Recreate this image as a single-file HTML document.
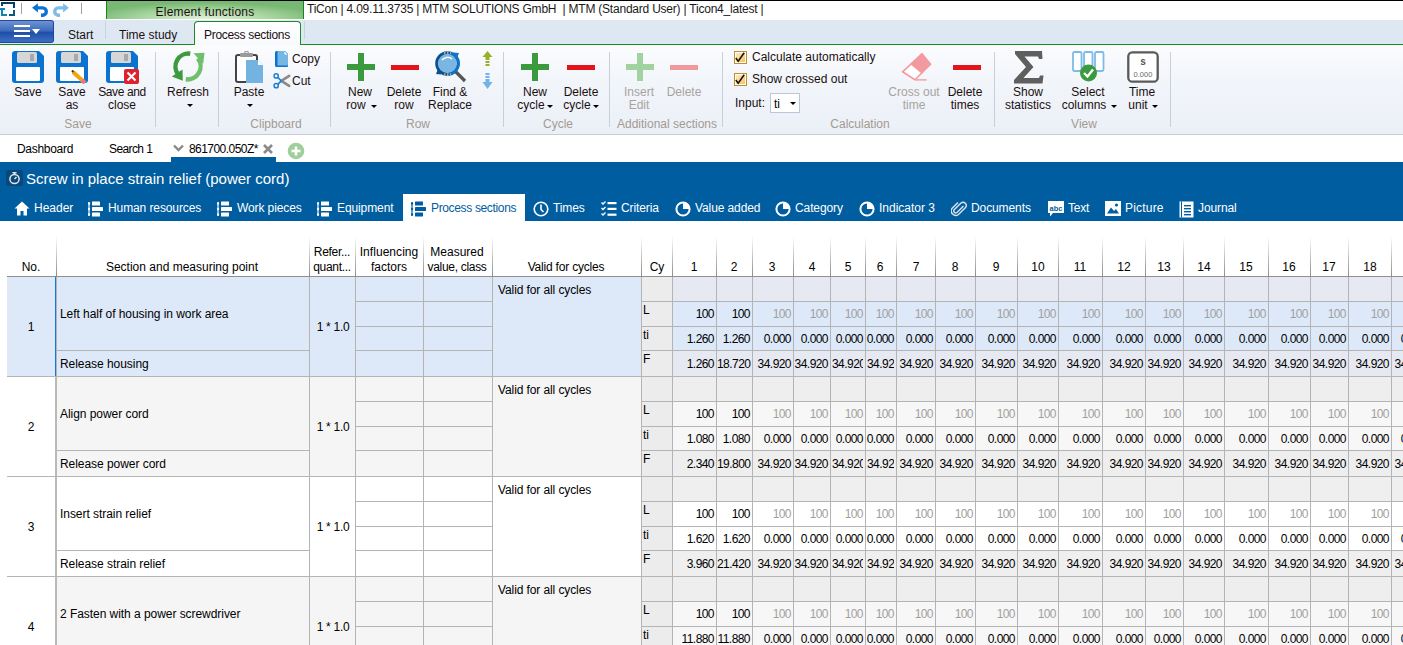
<!DOCTYPE html><html><head><meta charset="utf-8"><style>

*{box-sizing:border-box}
body{margin:0;width:1403px;height:645px;overflow:hidden;position:relative;background:#fff;font-family:"Liberation Sans",sans-serif;font-size:12px;color:#000}
.ab{position:absolute}
.t{position:absolute;white-space:nowrap;line-height:1}
.gl{position:absolute;color:#a09890;font-size:12px;white-space:nowrap;line-height:1}
.sep{position:absolute;width:1px;background:#c5cfdb;top:52px;height:75px}

</style></head><body>
<div class="ab" style="left:0px;top:0px;width:1403px;height:1px;background:#000"></div>
<div class="ab" style="left:0px;top:1px;width:1403px;height:19px;background:#fff"></div>
<svg class="ab" style="left:0;top:0" width="17" height="18" viewBox="0 0 17 18">
<path d="M1 2 H15 V8 H13 V4 H3 V6 H1 Z" fill="#0a3d6b"/>
<path d="M0 8 H5 V10 H3 V14 H7 V16 H1 V10 H0 Z" fill="#0f87b5"/>
<path d="M13 10 H15 V16 H9 V14 H13 Z" fill="#0a5a7c"/>
</svg>
<div class="ab" style="left:21px;top:3px;width:1px;height:11px;background:#a0a0a0"></div>
<svg class="ab" style="left:31px;top:2px" width="18" height="16" viewBox="0 0 18 16">
<path d="M6 5.9 H11.65 A3.65 3.65 0 0 1 11.65 13.2 H10" fill="none" stroke="#0a74d0" stroke-width="3.4"/>
<path d="M1.1 5.8 L6.9 1.2 L6.9 10.4 Z" fill="#0a74d0"/></svg>
<svg class="ab" style="left:52px;top:2px" width="18" height="16" viewBox="0 0 18 16">
<path d="M12 5.9 H6.35 A3.65 3.65 0 0 0 6.35 13.2 H8" fill="none" stroke="#80bce8" stroke-width="3.4"/>
<path d="M16.9 5.8 L11.1 1.2 L11.1 10.4 Z" fill="#80bce8"/></svg>
<div class="ab" style="left:81px;top:3px;width:1px;height:11px;background:#a0a0a0"></div>
<div class="ab" style="left:106px;top:1px;width:198px;height:18px;background:radial-gradient(ellipse 60% 90% at 50% 100%,#e2f1dd 0%,#a9d6a0 55%,#78b874 100%);border-left:1px solid #118a11;border-right:1px solid #118a11"></div>
<div class="t" style="left:55px;width:300px;text-align:center;top:6px;font-size:12px;color:#1a1010;letter-spacing:0.2px">Element functions</div>
<div class="t" style="left:307px;top:3px;font-size:12px;color:#1a1a1a;letter-spacing:-0.22px">TiCon | 4.09.11.3735 | MTM SOLUTIONS GmbH &nbsp;| MTM (Standard User) | Ticon4_latest |</div>
<div class="ab" style="left:0px;top:20px;width:1403px;height:24px;background:#dee8f3"></div>
<div class="ab" style="left:0px;top:44px;width:1403px;height:1px;background:#1f8a1f"></div>
<div class="ab" style="left:0px;top:20px;width:54px;height:23px;background:linear-gradient(#6d93d0 0%,#3f6cbf 45%,#1f4fa8 55%,#3d6fc4 100%);border:1px solid #1b4aa0;border-left:none;border-radius:0 3px 3px 0"></div>
<div class="ab" style="left:14px;top:25px;width:16px;height:2px;background:#fff"></div>
<div class="ab" style="left:14px;top:30px;width:16px;height:2px;background:#fff"></div>
<div class="ab" style="left:14px;top:35px;width:16px;height:2px;background:#fff"></div>
<svg class="ab" style="left:32px;top:29px" width="8" height="5"><path d="M0 0 H8 L4 5 Z" fill="#fff"/></svg>
<div class="t" style="left:68px;top:29px;font-size:12px;color:#1a1010;">Start</div>
<div class="ab" style="left:105px;top:21px;width:1px;height:18px;background:#c9d3e0"></div>
<div class="t" style="left:119px;top:29px;font-size:12px;color:#1a1010;">Time study</div>
<div class="ab" style="left:194px;top:21px;width:107px;height:24px;background:linear-gradient(#ffffff,#f7f9fc);border:1px solid #1f8a1f;border-bottom:none;border-radius:4px 4px 0 0"></div>
<div class="t" style="left:204px;top:29px;font-size:12px;color:#1a1010;letter-spacing:-0.3px">Process sections</div>
<div class="ab" style="left:304px;top:21px;width:1px;height:18px;background:#c9d3e0"></div>
<div class="ab" style="left:0px;top:45px;width:1403px;height:89px;background:linear-gradient(#fbfcfe 0%,#f2f5fa 40%,#ebf0f7 100%)"></div>
<div class="ab" style="left:0px;top:134px;width:1403px;height:1px;background:#c3cedb"></div>
<div class="ab" style="left:155px;top:52px;width:1px;height:75px;background:#c6d0dc"></div>
<div class="ab" style="left:218px;top:52px;width:1px;height:75px;background:#c6d0dc"></div>
<div class="ab" style="left:330px;top:52px;width:1px;height:75px;background:#c6d0dc"></div>
<div class="ab" style="left:503px;top:52px;width:1px;height:75px;background:#c6d0dc"></div>
<div class="ab" style="left:609px;top:52px;width:1px;height:75px;background:#c6d0dc"></div>
<div class="ab" style="left:722px;top:52px;width:1px;height:75px;background:#c6d0dc"></div>
<div class="ab" style="left:994px;top:52px;width:1px;height:75px;background:#c6d0dc"></div>
<div class="ab" style="left:1170px;top:52px;width:1px;height:75px;background:#c6d0dc"></div>
<div class="t" style="left:-72px;width:300px;text-align:center;top:118px;font-size:12px;color:#a39a92;">Save</div>
<div class="t" style="left:126px;width:300px;text-align:center;top:118px;font-size:12px;color:#a39a92;">Clipboard</div>
<div class="t" style="left:268px;width:300px;text-align:center;top:118px;font-size:12px;color:#a39a92;">Row</div>
<div class="t" style="left:408px;width:300px;text-align:center;top:118px;font-size:12px;color:#a39a92;">Cycle</div>
<div class="t" style="left:517px;width:300px;text-align:center;top:118px;font-size:12px;color:#a39a92;">Additional sections</div>
<div class="t" style="left:710px;width:300px;text-align:center;top:118px;font-size:12px;color:#a39a92;">Calculation</div>
<div class="t" style="left:934px;width:300px;text-align:center;top:118px;font-size:12px;color:#a39a92;">View</div>
<svg class="ab" style="left:12px;top:51px" width="33" height="33" viewBox="0 0 33 33">
<path d="M3 0 H27 L32 5 V29 A3 3 0 0 1 29 32 H3 A3 3 0 0 1 0 29 V3 A3 3 0 0 1 3 0 Z" fill="#0b73cf"/>
<rect x="5" y="1" width="20" height="11" rx="1.5" fill="#d6d6d6"/>
<rect x="18" y="3" width="4" height="7" fill="#a9a9a9"/>
<rect x="4" y="16" width="24" height="14" rx="1" fill="#fff"/></svg>
<div class="t" style="left:-122px;width:300px;text-align:center;top:86px;font-size:12px;color:#1a1010;">Save</div>
<svg class="ab" style="left:56px;top:51px" width="33" height="33" viewBox="0 0 33 33">
<path d="M3 0 H27 L32 5 V29 A3 3 0 0 1 29 32 H3 A3 3 0 0 1 0 29 V3 A3 3 0 0 1 3 0 Z" fill="#0b73cf"/>
<rect x="5" y="1" width="20" height="11" rx="1.5" fill="#d6d6d6"/>
<rect x="18" y="3" width="4" height="7" fill="#a9a9a9"/>
<rect x="4" y="16" width="24" height="14" rx="1" fill="#fff"/><path d="M17 21 L28 31" stroke="#f2a40d" stroke-width="4" stroke-linecap="butt"/><path d="M26 29 L29 32" stroke="#e87c7c" stroke-width="4"/><path d="M16 19.5 L17.5 21" stroke="#333" stroke-width="2"/></svg>
<div class="t" style="left:-78px;width:300px;text-align:center;top:86px;font-size:12px;color:#1a1010;">Save</div>
<div class="t" style="left:-78px;width:300px;text-align:center;top:99px;font-size:12px;color:#1a1010;">as</div>
<svg class="ab" style="left:106px;top:51px" width="33" height="33" viewBox="0 0 33 33">
<path d="M3 0 H27 L32 5 V29 A3 3 0 0 1 29 32 H3 A3 3 0 0 1 0 29 V3 A3 3 0 0 1 3 0 Z" fill="#0b73cf"/>
<rect x="5" y="1" width="20" height="11" rx="1.5" fill="#d6d6d6"/>
<rect x="18" y="3" width="4" height="7" fill="#a9a9a9"/>
<rect x="4" y="16" width="24" height="14" rx="1" fill="#fff"/><rect x="18" y="18" width="15" height="15" rx="2" fill="#e0202a"/><path d="M21.5 21.5 L29.5 29.5 M29.5 21.5 L21.5 29.5" stroke="#fff" stroke-width="2.2"/></svg>
<div class="t" style="left:-28px;width:300px;text-align:center;top:86px;font-size:12px;color:#1a1010;letter-spacing:-0.4px">Save and</div>
<div class="t" style="left:-28px;width:300px;text-align:center;top:99px;font-size:12px;color:#1a1010;">close</div>
<svg class="ab" style="left:171px;top:50px" width="35" height="34" viewBox="0 0 35 34">
<path d="M19.26 3.7 A13 13 0 0 0 7.2 24.6" fill="none" stroke="#3d9a3f" stroke-width="4.4"/>
<path d="M0.8 26.5 L11.5 19.5 L11.8 30.8 Z" fill="#3d9a3f"/>
<path d="M14.74 29.3 A13 13 0 0 0 26.8 8.4" fill="none" stroke="#6fbf6b" stroke-width="4.4"/>
<path d="M22.5 3.2 L33.5 2.8 L32.2 14 Z" fill="#6fbf6b"/></svg>
<div class="t" style="left:38px;width:300px;text-align:center;top:86px;font-size:12px;color:#1a1010;">Refresh</div>
<svg class="ab" style="left:187px;top:104px" width="6" height="4"><path d="M0 0 H6 L3 3 Z" fill="#000"/></svg>
<svg class="ab" style="left:235px;top:51px" width="29" height="33" viewBox="0 0 29 33">
<rect x="1" y="4" width="21" height="27" rx="2" fill="#fff" stroke="#444" stroke-width="2"/>
<rect x="5" y="2" width="13" height="4" rx="1" fill="#9a9a9a"/>
<circle cx="11.5" cy="2" r="1.8" fill="none" stroke="#9a9a9a" stroke-width="1.2"/>
<path d="M11 9 H23 L28 14 V32 H11 Z" fill="#72b3e2"/>
<path d="M23 9 V14 H28 Z" fill="#fff"/></svg>
<div class="t" style="left:99px;width:300px;text-align:center;top:86px;font-size:12px;color:#1a1010;">Paste</div>
<svg class="ab" style="left:247px;top:104px" width="6" height="4"><path d="M0 0 H6 L3 3 Z" fill="#000"/></svg>
<svg class="ab" style="left:275px;top:51px" width="14" height="17" viewBox="0 0 14 17">
<path d="M1.5 0 H10 L13 3 V15 A1 1 0 0 1 12 16 H1.5 A1.5 1.5 0 0 1 0 14.5 V1.5 A1.5 1.5 0 0 1 1.5 0 Z" fill="#0b73cf"/>
<path d="M2.5 0 H10 L13 3 V13.5 A1 1 0 0 1 12 14.5 H2.5 Z" fill="#76b6e3"/><path d="M9.5 0.5 V3.5 H12.5 Z" fill="#fff"/></svg>
<div class="t" style="left:292px;top:53px;font-size:12px;color:#1a1010;">Copy</div>
<svg class="ab" style="left:273px;top:73px" width="18" height="16" viewBox="0 0 18 16">
<path d="M8.3 7.9 L16.2 2.9 M8.3 7.9 L16.2 12.9" stroke="#8a8a8a" stroke-width="2.6" stroke-linecap="round"/>
<path d="M4.8 4.4 L8.3 7.9 L4.8 11.4" fill="none" stroke="#1b7fd6" stroke-width="1.6"/>
<circle cx="3.2" cy="2.9" r="2.1" fill="none" stroke="#1b7fd6" stroke-width="1.5"/>
<circle cx="3.2" cy="12.7" r="2.1" fill="none" stroke="#1b7fd6" stroke-width="1.5"/></svg>
<div class="t" style="left:292px;top:75px;font-size:12px;color:#1a1010;">Cut</div>
<div class="ab" style="left:358px;top:53px;width:6px;height:28px;background:#3c9a3e"></div>
<div class="ab" style="left:347px;top:64px;width:28px;height:6px;background:#3c9a3e"></div>
<div class="t" style="left:210px;width:300px;text-align:center;top:86px;font-size:12px;color:#1a1010;">New</div>
<div class="t" style="left:206px;width:300px;text-align:center;top:99px;font-size:12px;color:#1a1010;">row</div>
<svg class="ab" style="left:371px;top:105px" width="6" height="4"><path d="M0 0 H6 L3 3 Z" fill="#000"/></svg>
<div class="ab" style="left:391px;top:65px;width:28px;height:5px;background:#e2141c"></div>
<div class="t" style="left:254px;width:300px;text-align:center;top:86px;font-size:12px;color:#1a1010;">Delete</div>
<div class="t" style="left:254px;width:300px;text-align:center;top:99px;font-size:12px;color:#1a1010;">row</div>
<svg class="ab" style="left:435px;top:51px" width="32" height="32" viewBox="0 0 32 32">
<path d="M20 20 L30 30" stroke="#555" stroke-width="3.2"/>
<circle cx="12.5" cy="12.5" r="11" fill="#79b6e2" stroke="#0d4f8c" stroke-width="2.6"/><path d="M15 1.8 A11 11 0 0 1 14 23.4" fill="none" stroke="#0a74d0" stroke-width="2.6"/><path d="M9 1.6 H16 M9 23.6 H16" stroke="#b0a890" stroke-width="2.6" stroke-dasharray="1.5 1.5"/>
<path d="M7 9 A7 7 0 0 1 17 8" fill="none" stroke="#fff" stroke-width="1.5"/>
<path d="M18 1.5 L24 2 L22 7 Z" fill="#1a73c8"/><path d="M6.5 23.5 L1 23 L3 18 Z" fill="#0d4f8c"/></svg>
<div class="t" style="left:300px;width:300px;text-align:center;top:86px;font-size:12px;color:#1a1010;">Find &amp;</div>
<div class="t" style="left:300px;width:300px;text-align:center;top:99px;font-size:12px;color:#1a1010;">Replace</div>
<svg class="ab" style="left:482px;top:51px" width="11" height="39" viewBox="0 0 11 39">
<path d="M5.5 0 L10.5 6 H0.5 Z" fill="#9aae28"/><rect x="3.5" y="6" width="4" height="3" fill="#9aae28"/><rect x="3.5" y="10" width="4" height="2" fill="#9aae28"/><rect x="3.5" y="13" width="4" height="2" fill="#9aae28"/>
<rect x="3.5" y="22" width="4" height="2" fill="#72b2e6"/><rect x="3.5" y="25" width="4" height="2" fill="#72b2e6"/><rect x="3.5" y="28" width="4" height="3" fill="#72b2e6"/><path d="M5.5 38 L10.5 31 H0.5 Z" fill="#72b2e6"/></svg>
<div class="ab" style="left:532px;top:53px;width:6px;height:28px;background:#3c9a3e"></div>
<div class="ab" style="left:521px;top:64px;width:28px;height:6px;background:#3c9a3e"></div>
<div class="t" style="left:385px;width:300px;text-align:center;top:86px;font-size:12px;color:#1a1010;">New</div>
<div class="t" style="left:381px;width:300px;text-align:center;top:99px;font-size:12px;color:#1a1010;">cycle</div>
<svg class="ab" style="left:547px;top:105px" width="6" height="4"><path d="M0 0 H6 L3 3 Z" fill="#000"/></svg>
<div class="ab" style="left:567px;top:65px;width:28px;height:5px;background:#e2141c"></div>
<div class="t" style="left:431px;width:300px;text-align:center;top:86px;font-size:12px;color:#1a1010;">Delete</div>
<div class="t" style="left:427px;width:300px;text-align:center;top:99px;font-size:12px;color:#1a1010;">cycle</div>
<svg class="ab" style="left:593px;top:105px" width="6" height="4"><path d="M0 0 H6 L3 3 Z" fill="#000"/></svg>
<div class="ab" style="left:637px;top:53px;width:6px;height:28px;background:#a0d3a0"></div>
<div class="ab" style="left:626px;top:64px;width:28px;height:6px;background:#a0d3a0"></div>
<div class="t" style="left:489px;width:300px;text-align:center;top:86px;font-size:12px;color:#a8a3a0;">Insert</div>
<div class="t" style="left:489px;width:300px;text-align:center;top:99px;font-size:12px;color:#a8a3a0;">Edit</div>
<div class="ab" style="left:670px;top:65px;width:28px;height:5px;background:#f0999c"></div>
<div class="t" style="left:534px;width:300px;text-align:center;top:86px;font-size:12px;color:#a8a3a0;">Delete</div>
<svg class="ab" style="left:734px;top:51px" width="13" height="13" viewBox="0 0 13 13">
<defs><linearGradient id="cg" x1="0" y1="0" x2="1" y2="1"><stop offset="0" stop-color="#fde9c4"/><stop offset="1" stop-color="#f8c25a"/></linearGradient></defs>
<rect x="0.5" y="0.5" width="12" height="12" fill="#fff" stroke="#bf8f2a"/><rect x="2" y="2" width="9" height="9" fill="url(#cg)"/>
<path d="M1.8 7 L4.2 10.3 L10.2 1.8" fill="none" stroke="#111" stroke-width="1.5"/></svg>
<div class="t" style="left:752px;top:51px;font-size:12px;color:#1a1010;">Calculate automatically</div>
<svg class="ab" style="left:734px;top:73px" width="13" height="13" viewBox="0 0 13 13">
<defs><linearGradient id="cg" x1="0" y1="0" x2="1" y2="1"><stop offset="0" stop-color="#fde9c4"/><stop offset="1" stop-color="#f8c25a"/></linearGradient></defs>
<rect x="0.5" y="0.5" width="12" height="12" fill="#fff" stroke="#bf8f2a"/><rect x="2" y="2" width="9" height="9" fill="url(#cg)"/>
<path d="M1.8 7 L4.2 10.3 L10.2 1.8" fill="none" stroke="#111" stroke-width="1.5"/></svg>
<div class="t" style="left:752px;top:73px;font-size:12px;color:#1a1010;">Show crossed out</div>
<div class="t" style="left:735px;top:97px;font-size:12px;color:#1a1010;">Input:</div>
<div class="ab" style="left:770px;top:93px;width:30px;height:20px;background:#fff;border:1px solid #b9c7d8"></div>
<div class="t" style="left:774px;top:98px;font-size:12px;color:#000;">ti</div>
<svg class="ab" style="left:790px;top:102px" width="6" height="4"><path d="M0 0 H6 L3 3 Z" fill="#000"/></svg>
<svg class="ab" style="left:901px;top:52px" width="31" height="30" viewBox="0 0 31 30">
<path d="M21 1.7 L29.6 12.3 L21 20.8 L10.2 11.8 Z" fill="#f39aa0" stroke="#f39aa0" stroke-width="1.6" stroke-linejoin="round"/>
<path d="M10.2 11.8 L21 20.8 L14 27.7 L1.5 19.8 Z" fill="#fff" stroke="#f39aa0" stroke-width="1.6" stroke-linejoin="round"/>
<path d="M14 27.9 H25.7" stroke="#f39aa0" stroke-width="1.4"/></svg>
<div class="t" style="left:764px;width:300px;text-align:center;top:86px;font-size:12px;color:#a8a3a0;">Cross out</div>
<div class="t" style="left:764px;width:300px;text-align:center;top:99px;font-size:12px;color:#a8a3a0;">time</div>
<div class="ab" style="left:953px;top:65px;width:28px;height:5px;background:#e2141c"></div>
<div class="t" style="left:815px;width:300px;text-align:center;top:86px;font-size:12px;color:#1a1010;">Delete</div>
<div class="t" style="left:815px;width:300px;text-align:center;top:99px;font-size:12px;color:#1a1010;">times</div>
<svg class="ab" style="left:1014px;top:51px" width="30" height="33" viewBox="0 0 30 33">
<path d="M1 0 H28 L28.5 8 H25 L24 5.5 H10.5 L19.5 16 L9.5 27 H25 L26 24.5 H29.5 L28.5 32.5 H0 V29 L12 16 L1 3 Z" fill="#5f5f5f"/></svg>
<div class="t" style="left:878px;width:300px;text-align:center;top:86px;font-size:12px;color:#1a1010;">Show</div>
<div class="t" style="left:878px;width:300px;text-align:center;top:99px;font-size:12px;color:#1a1010;">statistics</div>
<svg class="ab" style="left:1072px;top:51px" width="33" height="32" viewBox="0 0 33 32">
<rect x="1" y="1" width="8.5" height="19" rx="1.5" fill="#fff" stroke="#7cbbe8" stroke-width="1.8"/>
<rect x="12" y="1" width="8.5" height="19" rx="1.5" fill="#fff" stroke="#7cbbe8" stroke-width="1.8"/>
<rect x="23" y="1" width="8.5" height="19" rx="1.5" fill="#fff" stroke="#7cbbe8" stroke-width="1.8"/>
<circle cx="16.5" cy="22" r="8.5" fill="#3c9a3e"/>
<path d="M12 22 L15.5 25.5 L21 18.5" fill="none" stroke="#fff" stroke-width="2.4"/></svg>
<div class="t" style="left:938px;width:300px;text-align:center;top:86px;font-size:12px;color:#1a1010;">Select</div>
<div class="t" style="left:934px;width:300px;text-align:center;top:99px;font-size:12px;color:#1a1010;">columns</div>
<svg class="ab" style="left:1111px;top:105px" width="6" height="4"><path d="M0 0 H6 L3 3 Z" fill="#000"/></svg>
<svg class="ab" style="left:1127px;top:51px" width="32" height="32" viewBox="0 0 32 32">
<rect x="1.3" y="1.3" width="29.4" height="29.4" rx="4" fill="#fff" stroke="#5a5a5a" stroke-width="2.3"/>
<text x="16" y="14" font-family="Liberation Sans" font-size="10" font-weight="bold" fill="#555" text-anchor="middle">s</text>
<text x="16" y="25.5" font-family="Liberation Sans" font-size="7.5" fill="#6a6a6a" text-anchor="middle">0.000</text></svg>
<div class="t" style="left:992px;width:300px;text-align:center;top:86px;font-size:12px;color:#1a1010;">Time</div>
<div class="t" style="left:988px;width:300px;text-align:center;top:99px;font-size:12px;color:#1a1010;">unit</div>
<svg class="ab" style="left:1152px;top:105px" width="6" height="4"><path d="M0 0 H6 L3 3 Z" fill="#000"/></svg>
<div class="t" style="left:17px;top:143px;font-size:12px;color:#000;letter-spacing:-0.3px">Dashboard</div>
<div class="t" style="left:109px;top:143px;font-size:12px;color:#000;letter-spacing:-0.6px">Search 1</div>
<svg class="ab" style="left:173px;top:144px" width="11" height="8" viewBox="0 0 11 8"><path d="M1 1.5 L5.5 6 L10 1.5" fill="none" stroke="#8a8a8a" stroke-width="2.4"/></svg>
<div class="t" style="left:189px;top:143px;font-size:12px;color:#000;letter-spacing:-0.55px">861700.050Z*</div>
<svg class="ab" style="left:263px;top:144px" width="10" height="10" viewBox="0 0 10 10"><path d="M1 1 L9 9 M9 1 L1 9" stroke="#8a8a8a" stroke-width="2.6"/></svg>
<svg class="ab" style="left:287px;top:142px" width="18" height="18" viewBox="0 0 18 18"><circle cx="9" cy="9" r="8.3" fill="#9fd09b"/><path d="M9 4.5 V13.5 M4.5 9 H13.5" stroke="#fff" stroke-width="2.6"/></svg>
<div class="ab" style="left:171px;top:157px;width:105px;height:5px;background:#005d9f"></div>
<div class="ab" style="left:0px;top:162px;width:1403px;height:59px;background:#005d9f"></div>
<svg class="ab" style="left:6px;top:170px" width="17" height="16" viewBox="0 0 17 16">
<rect x="0" y="0" width="17" height="16" rx="2" fill="#0a4879"/>
<circle cx="8.5" cy="9" r="4.6" fill="none" stroke="#dfe8f0" stroke-width="1.5"/>
<path d="M6.5 2.8 H10.5 M8.5 3 V4.5 M8.5 9 L10.5 7" stroke="#dfe8f0" stroke-width="1.4"/></svg>
<div class="t" style="left:26px;top:171px;font-size:15px;color:#fff;letter-spacing:0px">Screw in place strain relief (power cord)</div>
<div class="ab" style="left:403px;top:194px;width:122px;height:27px;background:#fff"></div>
<svg class="ab" style="left:14px;top:201px" width="16" height="15" viewBox="0 0 16 15"><path d="M8 0.5 L15.5 7.5 H13 V14.5 H9.5 V10 H6.5 V14.5 H3 V7.5 H0.5 Z" fill="#fff"/></svg>
<div class="t" style="left:34px;top:202px;font-size:12px;color:#fff;">Header</div>
<svg class="ab" style="left:88px;top:201px" width="16" height="16" viewBox="0 0 16 16">
<path d="M1 1 V15" stroke="#fff" stroke-width="1.2"/>
<circle cx="1" cy="2.5" r="1.2" fill="#fff"/><circle cx="1" cy="8" r="1.2" fill="#fff"/><circle cx="1" cy="13.5" r="1.2" fill="#fff"/>
<rect x="4" y="0.5" width="8" height="4" rx="0.5" fill="#fff"/><rect x="4" y="6" width="11" height="4" rx="0.5" fill="#fff"/><rect x="4" y="11.5" width="8" height="4" rx="0.5" fill="#fff"/></svg>
<div class="t" style="left:108px;top:202px;font-size:12px;color:#fff;letter-spacing:-0.1px">Human resources</div>
<svg class="ab" style="left:217px;top:201px" width="16" height="16" viewBox="0 0 16 16">
<path d="M1 1 V15" stroke="#fff" stroke-width="1.2"/>
<circle cx="1" cy="2.5" r="1.2" fill="#fff"/><circle cx="1" cy="8" r="1.2" fill="#fff"/><circle cx="1" cy="13.5" r="1.2" fill="#fff"/>
<rect x="4" y="0.5" width="8" height="4" rx="0.5" fill="#fff"/><rect x="4" y="6" width="11" height="4" rx="0.5" fill="#fff"/><rect x="4" y="11.5" width="8" height="4" rx="0.5" fill="#fff"/></svg>
<div class="t" style="left:237px;top:202px;font-size:12px;color:#fff;letter-spacing:-0.1px">Work pieces</div>
<svg class="ab" style="left:317px;top:201px" width="16" height="16" viewBox="0 0 16 16">
<path d="M1 1 V15" stroke="#fff" stroke-width="1.2"/>
<circle cx="1" cy="2.5" r="1.2" fill="#fff"/><circle cx="1" cy="8" r="1.2" fill="#fff"/><circle cx="1" cy="13.5" r="1.2" fill="#fff"/>
<rect x="4" y="0.5" width="8" height="4" rx="0.5" fill="#fff"/><rect x="4" y="6" width="11" height="4" rx="0.5" fill="#fff"/><rect x="4" y="11.5" width="8" height="4" rx="0.5" fill="#fff"/></svg>
<div class="t" style="left:337px;top:202px;font-size:12px;color:#fff;letter-spacing:-0.1px">Equipment</div>
<svg class="ab" style="left:411px;top:201px" width="16" height="16" viewBox="0 0 16 16">
<path d="M1 1 V15" stroke="#005d9f" stroke-width="1.2"/>
<circle cx="1" cy="2.5" r="1.2" fill="#005d9f"/><circle cx="1" cy="8" r="1.2" fill="#005d9f"/><circle cx="1" cy="13.5" r="1.2" fill="#005d9f"/>
<rect x="4" y="0.5" width="8" height="4" rx="0.5" fill="#005d9f"/><rect x="4" y="6" width="11" height="4" rx="0.5" fill="#005d9f"/><rect x="4" y="11.5" width="8" height="4" rx="0.5" fill="#005d9f"/></svg>
<div class="t" style="left:431px;top:202px;font-size:12px;color:#005d9f;letter-spacing:-0.35px">Process sections</div>
<svg class="ab" style="left:533px;top:201px" width="16" height="16" viewBox="0 0 16 16">
<circle cx="8" cy="8" r="6.8" fill="none" stroke="#fff" stroke-width="1.6"/><path d="M8 3.5 V8.5 L10.5 11" fill="none" stroke="#fff" stroke-width="1.6"/></svg>
<div class="t" style="left:553px;top:202px;font-size:12px;color:#fff;letter-spacing:-0.1px">Times</div>
<svg class="ab" style="left:601px;top:201px" width="16" height="16" viewBox="0 0 16 16">
<path d="M0.5 1.5 L2 3 L4.5 0.5 M0.5 7 L2 8.5 L4.5 6 M0.5 12.5 L2 14 L4.5 11.5" fill="none" stroke="#fff" stroke-width="1.3"/>
<rect x="6.5" y="1" width="9" height="2.2" fill="#fff"/><rect x="6.5" y="6.8" width="9" height="2.2" fill="#fff"/><rect x="6.5" y="12.6" width="9" height="2.2" fill="#fff"/></svg>
<div class="t" style="left:621px;top:202px;font-size:12px;color:#fff;letter-spacing:-0.1px">Criteria</div>
<svg class="ab" style="left:675px;top:201px" width="16" height="16" viewBox="0 0 16 16">
<circle cx="8" cy="8" r="6.6" fill="none" stroke="#fff" stroke-width="2"/><path d="M8 8 V1.4 A6.6 6.6 0 0 1 14.6 8 Z" fill="#fff"/></svg>
<div class="t" style="left:695px;top:202px;font-size:12px;color:#fff;letter-spacing:-0.1px">Value added</div>
<svg class="ab" style="left:775px;top:201px" width="16" height="16" viewBox="0 0 16 16">
<circle cx="8" cy="8" r="6.6" fill="none" stroke="#fff" stroke-width="2"/><path d="M8 8 V1.4 A6.6 6.6 0 0 1 14.6 8 Z" fill="#fff"/></svg>
<div class="t" style="left:795px;top:202px;font-size:12px;color:#fff;letter-spacing:-0.1px">Category</div>
<svg class="ab" style="left:859px;top:201px" width="16" height="16" viewBox="0 0 16 16">
<circle cx="8" cy="8" r="6.6" fill="none" stroke="#fff" stroke-width="2"/><path d="M8 8 V1.4 A6.6 6.6 0 0 1 14.6 8 Z" fill="#fff"/></svg>
<div class="t" style="left:879px;top:202px;font-size:12px;color:#fff;letter-spacing:0px">Indicator 3</div>
<svg class="ab" style="left:951px;top:201px" width="16" height="16" viewBox="0 0 16 16">
<path d="M12.5 5 L6 11.5 A2 2 0 0 1 3.2 8.7 L10 2 A3.2 3.2 0 0 1 14.5 6.5 L7.5 13.5 A4.5 4.5 0 0 1 1.2 7.2 L7 1.5" fill="none" stroke="#dfe6ee" stroke-width="1.4"/></svg>
<div class="t" style="left:971px;top:202px;font-size:12px;color:#fff;letter-spacing:-0.1px">Documents</div>
<svg class="ab" style="left:1048px;top:201px" width="16" height="17" viewBox="0 0 16 17">
<path d="M0 0 H16 V12 H5 L2 15.5 V12 H0 Z" fill="#fff"/>
<text x="8" y="9.5" font-family="Liberation Sans" font-size="7.5" font-weight="bold" fill="#005ea3" text-anchor="middle">abc</text></svg>
<div class="t" style="left:1068px;top:202px;font-size:12px;color:#fff;letter-spacing:-0.2px">Text</div>
<svg class="ab" style="left:1105px;top:201px" width="16" height="15" viewBox="0 0 16 15">
<rect x="0" y="0" width="16" height="15" fill="#fff"/><path d="M2 12.5 L6 6.5 L9 10 L11 8 L14 12.5 Z" fill="#005ea3"/><circle cx="11.5" cy="4" r="1.6" fill="#005ea3"/></svg>
<div class="t" style="left:1125px;top:202px;font-size:12px;color:#fff;letter-spacing:0.2px">Picture</div>
<svg class="ab" style="left:1179px;top:201px" width="15" height="17" viewBox="0 0 15 17">
<rect x="0.5" y="0.5" width="14" height="16" fill="#fff"/><rect x="2" y="0.5" width="1" height="16" fill="#005ea3"/>
<rect x="5" y="4" width="7" height="1.4" fill="#005ea3"/><rect x="5" y="7" width="7" height="1.4" fill="#005ea3"/><rect x="5" y="10" width="7" height="1.4" fill="#005ea3"/><rect x="5" y="13" width="7" height="1.4" fill="#005ea3"/></svg>
<div class="t" style="left:1198px;top:202px;font-size:12px;color:#fff;letter-spacing:-0.1px">Journal</div>
<div class="ab" style="left:56px;top:236px;width:1px;height:40px;background:linear-gradient(#ffffff,#8c8c8c)"></div>
<div class="ab" style="left:309px;top:236px;width:1px;height:40px;background:linear-gradient(#ffffff,#8c8c8c)"></div>
<div class="ab" style="left:355px;top:236px;width:1px;height:40px;background:linear-gradient(#ffffff,#8c8c8c)"></div>
<div class="ab" style="left:423px;top:236px;width:1px;height:40px;background:linear-gradient(#ffffff,#8c8c8c)"></div>
<div class="ab" style="left:492px;top:236px;width:1px;height:40px;background:linear-gradient(#ffffff,#8c8c8c)"></div>
<div class="ab" style="left:641px;top:236px;width:1px;height:40px;background:linear-gradient(#ffffff,#8c8c8c)"></div>
<div class="ab" style="left:672px;top:236px;width:1px;height:40px;background:linear-gradient(#ffffff,#8c8c8c)"></div>
<div class="ab" style="left:716px;top:236px;width:1px;height:40px;background:linear-gradient(#ffffff,#8c8c8c)"></div>
<div class="ab" style="left:752px;top:236px;width:1px;height:40px;background:linear-gradient(#ffffff,#8c8c8c)"></div>
<div class="ab" style="left:793px;top:236px;width:1px;height:40px;background:linear-gradient(#ffffff,#8c8c8c)"></div>
<div class="ab" style="left:830px;top:236px;width:1px;height:40px;background:linear-gradient(#ffffff,#8c8c8c)"></div>
<div class="ab" style="left:865px;top:236px;width:1px;height:40px;background:linear-gradient(#ffffff,#8c8c8c)"></div>
<div class="ab" style="left:896px;top:236px;width:1px;height:40px;background:linear-gradient(#ffffff,#8c8c8c)"></div>
<div class="ab" style="left:935px;top:236px;width:1px;height:40px;background:linear-gradient(#ffffff,#8c8c8c)"></div>
<div class="ab" style="left:975px;top:236px;width:1px;height:40px;background:linear-gradient(#ffffff,#8c8c8c)"></div>
<div class="ab" style="left:1017px;top:236px;width:1px;height:40px;background:linear-gradient(#ffffff,#8c8c8c)"></div>
<div class="ab" style="left:1058px;top:236px;width:1px;height:40px;background:linear-gradient(#ffffff,#8c8c8c)"></div>
<div class="ab" style="left:1102px;top:236px;width:1px;height:40px;background:linear-gradient(#ffffff,#8c8c8c)"></div>
<div class="ab" style="left:1145px;top:236px;width:1px;height:40px;background:linear-gradient(#ffffff,#8c8c8c)"></div>
<div class="ab" style="left:1183px;top:236px;width:1px;height:40px;background:linear-gradient(#ffffff,#8c8c8c)"></div>
<div class="ab" style="left:1224px;top:236px;width:1px;height:40px;background:linear-gradient(#ffffff,#8c8c8c)"></div>
<div class="ab" style="left:1268px;top:236px;width:1px;height:40px;background:linear-gradient(#ffffff,#8c8c8c)"></div>
<div class="ab" style="left:1310px;top:236px;width:1px;height:40px;background:linear-gradient(#ffffff,#8c8c8c)"></div>
<div class="ab" style="left:1348px;top:236px;width:1px;height:40px;background:linear-gradient(#ffffff,#8c8c8c)"></div>
<div class="ab" style="left:1391px;top:236px;width:1px;height:40px;background:linear-gradient(#ffffff,#8c8c8c)"></div>
<div class="ab" style="left:7px;top:276px;width:1396px;height:1px;background:#8f8f8f"></div>
<div class="t" style="left:-119px;width:300px;text-align:center;top:261px;font-size:12px;color:#000;">No.</div>
<div class="t" style="left:32px;width:300px;text-align:center;top:261px;font-size:12px;color:#000;">Section and measuring point</div>
<div class="t" style="left:182px;width:300px;text-align:center;top:246px;font-size:12px;color:#000;letter-spacing:-0.3px">Refer...</div>
<div class="t" style="left:182px;width:300px;text-align:center;top:261px;font-size:12px;color:#000;letter-spacing:-0.3px">quant...</div>
<div class="t" style="left:239px;width:300px;text-align:center;top:246px;font-size:12px;color:#000;letter-spacing:0.05px">Influencing</div>
<div class="t" style="left:239px;width:300px;text-align:center;top:261px;font-size:12px;color:#000;">factors</div>
<div class="t" style="left:307px;width:300px;text-align:center;top:246px;font-size:12px;color:#000;">Measured</div>
<div class="t" style="left:307px;width:300px;text-align:center;top:261px;font-size:12px;color:#000;letter-spacing:-0.3px">value, class</div>
<div class="t" style="left:416px;width:300px;text-align:center;top:261px;font-size:12px;color:#000;letter-spacing:-0.2px">Valid for cycles</div>
<div class="t" style="left:507px;width:300px;text-align:center;top:261px;font-size:12px;color:#000;">Cy</div>
<div class="t" style="left:544px;width:300px;text-align:center;top:261px;font-size:12px;color:#000;">1</div>
<div class="t" style="left:584px;width:300px;text-align:center;top:261px;font-size:12px;color:#000;">2</div>
<div class="t" style="left:622px;width:300px;text-align:center;top:261px;font-size:12px;color:#000;">3</div>
<div class="t" style="left:662px;width:300px;text-align:center;top:261px;font-size:12px;color:#000;">4</div>
<div class="t" style="left:698px;width:300px;text-align:center;top:261px;font-size:12px;color:#000;">5</div>
<div class="t" style="left:730px;width:300px;text-align:center;top:261px;font-size:12px;color:#000;">6</div>
<div class="t" style="left:766px;width:300px;text-align:center;top:261px;font-size:12px;color:#000;">7</div>
<div class="t" style="left:805px;width:300px;text-align:center;top:261px;font-size:12px;color:#000;">8</div>
<div class="t" style="left:846px;width:300px;text-align:center;top:261px;font-size:12px;color:#000;">9</div>
<div class="t" style="left:888px;width:300px;text-align:center;top:261px;font-size:12px;color:#000;">10</div>
<div class="t" style="left:930px;width:300px;text-align:center;top:261px;font-size:12px;color:#000;">11</div>
<div class="t" style="left:974px;width:300px;text-align:center;top:261px;font-size:12px;color:#000;">12</div>
<div class="t" style="left:1014px;width:300px;text-align:center;top:261px;font-size:12px;color:#000;">13</div>
<div class="t" style="left:1054px;width:300px;text-align:center;top:261px;font-size:12px;color:#000;">14</div>
<div class="t" style="left:1096px;width:300px;text-align:center;top:261px;font-size:12px;color:#000;">15</div>
<div class="t" style="left:1139px;width:300px;text-align:center;top:261px;font-size:12px;color:#000;">16</div>
<div class="t" style="left:1179px;width:300px;text-align:center;top:261px;font-size:12px;color:#000;">17</div>
<div class="t" style="left:1220px;width:300px;text-align:center;top:261px;font-size:12px;color:#000;">18</div>
<div class="ab" style="left:7px;top:277px;width:49px;height:99px;background:#dde9f9"></div>
<div class="ab" style="left:56px;top:277px;width:585px;height:99px;background:#dde9f9"></div>
<div class="ab" style="left:641px;top:277px;width:31px;height:99px;background:#ececec"></div>
<div class="ab" style="left:672px;top:277px;width:731px;height:24px;background:#e6e9f1"></div>
<div class="ab" style="left:672px;top:302px;width:731px;height:48px;background:#dde9f9"></div>
<div class="ab" style="left:672px;top:351px;width:731px;height:25px;background:#e6e9f1"></div>
<div class="ab" style="left:7px;top:376px;width:1396px;height:1px;background:#b4b4b4"></div>
<div class="ab" style="left:56px;top:350px;width:253px;height:1px;background:#b4b4b4"></div>
<div class="ab" style="left:355px;top:301px;width:137px;height:1px;background:#b4b4b4"></div>
<div class="ab" style="left:641px;top:301px;width:762px;height:1px;background:#b4b4b4"></div>
<div class="ab" style="left:355px;top:326px;width:137px;height:1px;background:#b4b4b4"></div>
<div class="ab" style="left:641px;top:326px;width:762px;height:1px;background:#b4b4b4"></div>
<div class="ab" style="left:355px;top:350px;width:137px;height:1px;background:#b4b4b4"></div>
<div class="ab" style="left:641px;top:350px;width:762px;height:1px;background:#b4b4b4"></div>
<div class="ab" style="left:56px;top:277px;width:1px;height:99px;background:#b4b4b4"></div>
<div class="ab" style="left:309px;top:277px;width:1px;height:99px;background:#b4b4b4"></div>
<div class="ab" style="left:355px;top:277px;width:1px;height:99px;background:#b4b4b4"></div>
<div class="ab" style="left:423px;top:277px;width:1px;height:99px;background:#b4b4b4"></div>
<div class="ab" style="left:492px;top:277px;width:1px;height:99px;background:#b4b4b4"></div>
<div class="ab" style="left:641px;top:277px;width:1px;height:99px;background:#b4b4b4"></div>
<div class="ab" style="left:672px;top:277px;width:1px;height:99px;background:#b4b4b4"></div>
<div class="ab" style="left:716px;top:277px;width:1px;height:99px;background:#b4b4b4"></div>
<div class="ab" style="left:752px;top:277px;width:1px;height:99px;background:#b4b4b4"></div>
<div class="ab" style="left:793px;top:277px;width:1px;height:99px;background:#b4b4b4"></div>
<div class="ab" style="left:830px;top:277px;width:1px;height:99px;background:#b4b4b4"></div>
<div class="ab" style="left:865px;top:277px;width:1px;height:99px;background:#b4b4b4"></div>
<div class="ab" style="left:896px;top:277px;width:1px;height:99px;background:#b4b4b4"></div>
<div class="ab" style="left:935px;top:277px;width:1px;height:99px;background:#b4b4b4"></div>
<div class="ab" style="left:975px;top:277px;width:1px;height:99px;background:#b4b4b4"></div>
<div class="ab" style="left:1017px;top:277px;width:1px;height:99px;background:#b4b4b4"></div>
<div class="ab" style="left:1058px;top:277px;width:1px;height:99px;background:#b4b4b4"></div>
<div class="ab" style="left:1102px;top:277px;width:1px;height:99px;background:#b4b4b4"></div>
<div class="ab" style="left:1145px;top:277px;width:1px;height:99px;background:#b4b4b4"></div>
<div class="ab" style="left:1183px;top:277px;width:1px;height:99px;background:#b4b4b4"></div>
<div class="ab" style="left:1224px;top:277px;width:1px;height:99px;background:#b4b4b4"></div>
<div class="ab" style="left:1268px;top:277px;width:1px;height:99px;background:#b4b4b4"></div>
<div class="ab" style="left:1310px;top:277px;width:1px;height:99px;background:#b4b4b4"></div>
<div class="ab" style="left:1348px;top:277px;width:1px;height:99px;background:#b4b4b4"></div>
<div class="ab" style="left:1391px;top:277px;width:1px;height:99px;background:#b4b4b4"></div>
<div class="ab" style="left:55px;top:277px;width:1px;height:99px;background:#1a78d6"></div>
<div class="t" style="left:-119px;width:300px;text-align:center;top:321px;font-size:12px;color:#000;">1</div>
<div class="t" style="left:60px;top:308px;font-size:12px;color:#000;letter-spacing:-0.05px">Left half of housing in work area</div>
<div class="t" style="left:60px;top:358px;font-size:12px;color:#000;letter-spacing:-0.05px">Release housing</div>
<div class="t" style="left:183px;width:300px;text-align:center;top:321px;font-size:12px;color:#000;letter-spacing:-0.3px">1 * 1.0</div>
<div class="t" style="left:498px;top:284px;font-size:12px;color:#000;letter-spacing:-0.1px">Valid for all cycles</div>
<div class="t" style="left:643px;top:304px;font-size:12px;color:#000;">L</div>
<div class="t" style="left:643px;top:329px;font-size:12px;color:#000;">ti</div>
<div class="t" style="left:643px;top:353px;font-size:12px;color:#000;">F</div>
<div class="t" style="left:673px;top:308px;width:43px;overflow:hidden;font-size:12px;color:#000;letter-spacing:-0.55px;text-align:right;padding-right:2px">100</div>
<div class="t" style="left:673px;top:333px;width:43px;overflow:hidden;font-size:12px;color:#000;letter-spacing:-0.55px;text-align:right;padding-right:2px">1.260</div>
<div class="t" style="left:673px;top:358px;width:43px;overflow:hidden;font-size:12px;color:#000;letter-spacing:-0.55px;text-align:right;padding-right:2px">1.260</div>
<div class="t" style="left:717px;top:308px;width:35px;overflow:hidden;font-size:12px;color:#000;letter-spacing:-0.55px;text-align:right;padding-right:2px">100</div>
<div class="t" style="left:717px;top:333px;width:35px;overflow:hidden;font-size:12px;color:#000;letter-spacing:-0.55px;text-align:right;padding-right:2px">1.260</div>
<div class="t" style="left:717px;top:358px;width:35px;overflow:hidden;font-size:12px;color:#000;letter-spacing:-0.55px;text-align:right;padding-right:2px">18.720</div>
<div class="t" style="left:753px;top:308px;width:40px;overflow:hidden;font-size:12px;color:#a0a0a0;letter-spacing:-0.55px;text-align:right;padding-right:2px">100</div>
<div class="t" style="left:753px;top:333px;width:40px;overflow:hidden;font-size:12px;color:#000;letter-spacing:-0.55px;text-align:right;padding-right:2px">0.000</div>
<div class="t" style="left:753px;top:358px;width:40px;overflow:hidden;font-size:12px;color:#000;letter-spacing:-0.55px;text-align:right;padding-right:2px">34.920</div>
<div class="t" style="left:794px;top:308px;width:36px;overflow:hidden;font-size:12px;color:#a0a0a0;letter-spacing:-0.55px;text-align:right;padding-right:2px">100</div>
<div class="t" style="left:794px;top:333px;width:36px;overflow:hidden;font-size:12px;color:#000;letter-spacing:-0.55px;text-align:right;padding-right:2px">0.000</div>
<div class="t" style="left:794px;top:358px;width:36px;overflow:hidden;font-size:12px;color:#000;letter-spacing:-0.55px;text-align:right;padding-right:2px">34.920</div>
<div class="t" style="left:831px;top:308px;width:34px;overflow:hidden;font-size:12px;color:#a0a0a0;letter-spacing:-0.55px;text-align:right;padding-right:2px">100</div>
<div class="t" style="left:831px;top:333px;width:34px;overflow:hidden;font-size:12px;color:#000;letter-spacing:-0.55px;text-align:right;padding-right:2px">0.000</div>
<div class="t" style="left:831px;top:358px;width:32px;overflow:hidden;font-size:12px;color:#000;letter-spacing:-0.55px;padding-left:1px">34.920</div>
<div class="t" style="left:866px;top:308px;width:30px;overflow:hidden;font-size:12px;color:#a0a0a0;letter-spacing:-0.55px;text-align:right;padding-right:2px">100</div>
<div class="t" style="left:866px;top:333px;width:30px;overflow:hidden;font-size:12px;color:#000;letter-spacing:-0.55px;text-align:right;padding-right:2px">0.000</div>
<div class="t" style="left:866px;top:358px;width:28px;overflow:hidden;font-size:12px;color:#000;letter-spacing:-0.55px;padding-left:1px">34.920</div>
<div class="t" style="left:897px;top:308px;width:38px;overflow:hidden;font-size:12px;color:#a0a0a0;letter-spacing:-0.55px;text-align:right;padding-right:2px">100</div>
<div class="t" style="left:897px;top:333px;width:38px;overflow:hidden;font-size:12px;color:#000;letter-spacing:-0.55px;text-align:right;padding-right:2px">0.000</div>
<div class="t" style="left:897px;top:358px;width:38px;overflow:hidden;font-size:12px;color:#000;letter-spacing:-0.55px;text-align:right;padding-right:2px">34.920</div>
<div class="t" style="left:936px;top:308px;width:39px;overflow:hidden;font-size:12px;color:#a0a0a0;letter-spacing:-0.55px;text-align:right;padding-right:2px">100</div>
<div class="t" style="left:936px;top:333px;width:39px;overflow:hidden;font-size:12px;color:#000;letter-spacing:-0.55px;text-align:right;padding-right:2px">0.000</div>
<div class="t" style="left:936px;top:358px;width:39px;overflow:hidden;font-size:12px;color:#000;letter-spacing:-0.55px;text-align:right;padding-right:2px">34.920</div>
<div class="t" style="left:976px;top:308px;width:41px;overflow:hidden;font-size:12px;color:#a0a0a0;letter-spacing:-0.55px;text-align:right;padding-right:2px">100</div>
<div class="t" style="left:976px;top:333px;width:41px;overflow:hidden;font-size:12px;color:#000;letter-spacing:-0.55px;text-align:right;padding-right:2px">0.000</div>
<div class="t" style="left:976px;top:358px;width:41px;overflow:hidden;font-size:12px;color:#000;letter-spacing:-0.55px;text-align:right;padding-right:2px">34.920</div>
<div class="t" style="left:1018px;top:308px;width:40px;overflow:hidden;font-size:12px;color:#a0a0a0;letter-spacing:-0.55px;text-align:right;padding-right:2px">100</div>
<div class="t" style="left:1018px;top:333px;width:40px;overflow:hidden;font-size:12px;color:#000;letter-spacing:-0.55px;text-align:right;padding-right:2px">0.000</div>
<div class="t" style="left:1018px;top:358px;width:40px;overflow:hidden;font-size:12px;color:#000;letter-spacing:-0.55px;text-align:right;padding-right:2px">34.920</div>
<div class="t" style="left:1059px;top:308px;width:43px;overflow:hidden;font-size:12px;color:#a0a0a0;letter-spacing:-0.55px;text-align:right;padding-right:2px">100</div>
<div class="t" style="left:1059px;top:333px;width:43px;overflow:hidden;font-size:12px;color:#000;letter-spacing:-0.55px;text-align:right;padding-right:2px">0.000</div>
<div class="t" style="left:1059px;top:358px;width:43px;overflow:hidden;font-size:12px;color:#000;letter-spacing:-0.55px;text-align:right;padding-right:2px">34.920</div>
<div class="t" style="left:1103px;top:308px;width:42px;overflow:hidden;font-size:12px;color:#a0a0a0;letter-spacing:-0.55px;text-align:right;padding-right:2px">100</div>
<div class="t" style="left:1103px;top:333px;width:42px;overflow:hidden;font-size:12px;color:#000;letter-spacing:-0.55px;text-align:right;padding-right:2px">0.000</div>
<div class="t" style="left:1103px;top:358px;width:42px;overflow:hidden;font-size:12px;color:#000;letter-spacing:-0.55px;text-align:right;padding-right:2px">34.920</div>
<div class="t" style="left:1146px;top:308px;width:37px;overflow:hidden;font-size:12px;color:#a0a0a0;letter-spacing:-0.55px;text-align:right;padding-right:2px">100</div>
<div class="t" style="left:1146px;top:333px;width:37px;overflow:hidden;font-size:12px;color:#000;letter-spacing:-0.55px;text-align:right;padding-right:2px">0.000</div>
<div class="t" style="left:1146px;top:358px;width:37px;overflow:hidden;font-size:12px;color:#000;letter-spacing:-0.55px;text-align:right;padding-right:2px">34.920</div>
<div class="t" style="left:1184px;top:308px;width:40px;overflow:hidden;font-size:12px;color:#a0a0a0;letter-spacing:-0.55px;text-align:right;padding-right:2px">100</div>
<div class="t" style="left:1184px;top:333px;width:40px;overflow:hidden;font-size:12px;color:#000;letter-spacing:-0.55px;text-align:right;padding-right:2px">0.000</div>
<div class="t" style="left:1184px;top:358px;width:40px;overflow:hidden;font-size:12px;color:#000;letter-spacing:-0.55px;text-align:right;padding-right:2px">34.920</div>
<div class="t" style="left:1225px;top:308px;width:43px;overflow:hidden;font-size:12px;color:#a0a0a0;letter-spacing:-0.55px;text-align:right;padding-right:2px">100</div>
<div class="t" style="left:1225px;top:333px;width:43px;overflow:hidden;font-size:12px;color:#000;letter-spacing:-0.55px;text-align:right;padding-right:2px">0.000</div>
<div class="t" style="left:1225px;top:358px;width:43px;overflow:hidden;font-size:12px;color:#000;letter-spacing:-0.55px;text-align:right;padding-right:2px">34.920</div>
<div class="t" style="left:1269px;top:308px;width:41px;overflow:hidden;font-size:12px;color:#a0a0a0;letter-spacing:-0.55px;text-align:right;padding-right:2px">100</div>
<div class="t" style="left:1269px;top:333px;width:41px;overflow:hidden;font-size:12px;color:#000;letter-spacing:-0.55px;text-align:right;padding-right:2px">0.000</div>
<div class="t" style="left:1269px;top:358px;width:41px;overflow:hidden;font-size:12px;color:#000;letter-spacing:-0.55px;text-align:right;padding-right:2px">34.920</div>
<div class="t" style="left:1311px;top:308px;width:37px;overflow:hidden;font-size:12px;color:#a0a0a0;letter-spacing:-0.55px;text-align:right;padding-right:2px">100</div>
<div class="t" style="left:1311px;top:333px;width:37px;overflow:hidden;font-size:12px;color:#000;letter-spacing:-0.55px;text-align:right;padding-right:2px">0.000</div>
<div class="t" style="left:1311px;top:358px;width:37px;overflow:hidden;font-size:12px;color:#000;letter-spacing:-0.55px;text-align:right;padding-right:2px">34.920</div>
<div class="t" style="left:1349px;top:308px;width:42px;overflow:hidden;font-size:12px;color:#a0a0a0;letter-spacing:-0.55px;text-align:right;padding-right:2px">100</div>
<div class="t" style="left:1349px;top:333px;width:42px;overflow:hidden;font-size:12px;color:#000;letter-spacing:-0.55px;text-align:right;padding-right:2px">0.000</div>
<div class="t" style="left:1349px;top:358px;width:42px;overflow:hidden;font-size:12px;color:#000;letter-spacing:-0.55px;text-align:right;padding-right:2px">34.920</div>
<div class="t" style="left:1392px;top:308px;width:38px;overflow:hidden;font-size:12px;color:#a0a0a0;letter-spacing:-0.55px;text-align:right;padding-right:2px">100</div>
<div class="t" style="left:1392px;top:333px;width:38px;overflow:hidden;font-size:12px;color:#000;letter-spacing:-0.55px;text-align:right;padding-right:2px">0.000</div>
<div class="t" style="left:1392px;top:358px;width:38px;overflow:hidden;font-size:12px;color:#000;letter-spacing:-0.55px;text-align:right;padding-right:2px">34.920</div>
<div class="ab" style="left:7px;top:377px;width:49px;height:99px;background:#ffffff"></div>
<div class="ab" style="left:56px;top:377px;width:585px;height:99px;background:#f5f5f5"></div>
<div class="ab" style="left:641px;top:377px;width:31px;height:99px;background:#ececec"></div>
<div class="ab" style="left:672px;top:377px;width:731px;height:24px;background:#eeeeee"></div>
<div class="ab" style="left:672px;top:402px;width:731px;height:48px;background:#f7f7f7"></div>
<div class="ab" style="left:672px;top:451px;width:731px;height:25px;background:#eeeeee"></div>
<div class="ab" style="left:7px;top:476px;width:1396px;height:1px;background:#b4b4b4"></div>
<div class="ab" style="left:56px;top:450px;width:253px;height:1px;background:#b4b4b4"></div>
<div class="ab" style="left:355px;top:401px;width:137px;height:1px;background:#b4b4b4"></div>
<div class="ab" style="left:641px;top:401px;width:762px;height:1px;background:#b4b4b4"></div>
<div class="ab" style="left:355px;top:426px;width:137px;height:1px;background:#b4b4b4"></div>
<div class="ab" style="left:641px;top:426px;width:762px;height:1px;background:#b4b4b4"></div>
<div class="ab" style="left:355px;top:450px;width:137px;height:1px;background:#b4b4b4"></div>
<div class="ab" style="left:641px;top:450px;width:762px;height:1px;background:#b4b4b4"></div>
<div class="ab" style="left:56px;top:377px;width:1px;height:99px;background:#b4b4b4"></div>
<div class="ab" style="left:309px;top:377px;width:1px;height:99px;background:#b4b4b4"></div>
<div class="ab" style="left:355px;top:377px;width:1px;height:99px;background:#b4b4b4"></div>
<div class="ab" style="left:423px;top:377px;width:1px;height:99px;background:#b4b4b4"></div>
<div class="ab" style="left:492px;top:377px;width:1px;height:99px;background:#b4b4b4"></div>
<div class="ab" style="left:641px;top:377px;width:1px;height:99px;background:#b4b4b4"></div>
<div class="ab" style="left:672px;top:377px;width:1px;height:99px;background:#b4b4b4"></div>
<div class="ab" style="left:716px;top:377px;width:1px;height:99px;background:#b4b4b4"></div>
<div class="ab" style="left:752px;top:377px;width:1px;height:99px;background:#b4b4b4"></div>
<div class="ab" style="left:793px;top:377px;width:1px;height:99px;background:#b4b4b4"></div>
<div class="ab" style="left:830px;top:377px;width:1px;height:99px;background:#b4b4b4"></div>
<div class="ab" style="left:865px;top:377px;width:1px;height:99px;background:#b4b4b4"></div>
<div class="ab" style="left:896px;top:377px;width:1px;height:99px;background:#b4b4b4"></div>
<div class="ab" style="left:935px;top:377px;width:1px;height:99px;background:#b4b4b4"></div>
<div class="ab" style="left:975px;top:377px;width:1px;height:99px;background:#b4b4b4"></div>
<div class="ab" style="left:1017px;top:377px;width:1px;height:99px;background:#b4b4b4"></div>
<div class="ab" style="left:1058px;top:377px;width:1px;height:99px;background:#b4b4b4"></div>
<div class="ab" style="left:1102px;top:377px;width:1px;height:99px;background:#b4b4b4"></div>
<div class="ab" style="left:1145px;top:377px;width:1px;height:99px;background:#b4b4b4"></div>
<div class="ab" style="left:1183px;top:377px;width:1px;height:99px;background:#b4b4b4"></div>
<div class="ab" style="left:1224px;top:377px;width:1px;height:99px;background:#b4b4b4"></div>
<div class="ab" style="left:1268px;top:377px;width:1px;height:99px;background:#b4b4b4"></div>
<div class="ab" style="left:1310px;top:377px;width:1px;height:99px;background:#b4b4b4"></div>
<div class="ab" style="left:1348px;top:377px;width:1px;height:99px;background:#b4b4b4"></div>
<div class="ab" style="left:1391px;top:377px;width:1px;height:99px;background:#b4b4b4"></div>
<div class="ab" style="left:55px;top:377px;width:2px;height:99px;background:#b9b9b9"></div>
<div class="t" style="left:-119px;width:300px;text-align:center;top:421px;font-size:12px;color:#000;">2</div>
<div class="t" style="left:60px;top:408px;font-size:12px;color:#000;letter-spacing:-0.05px">Align power cord</div>
<div class="t" style="left:60px;top:458px;font-size:12px;color:#000;letter-spacing:-0.05px">Release power cord</div>
<div class="t" style="left:183px;width:300px;text-align:center;top:421px;font-size:12px;color:#000;letter-spacing:-0.3px">1 * 1.0</div>
<div class="t" style="left:498px;top:384px;font-size:12px;color:#000;letter-spacing:-0.1px">Valid for all cycles</div>
<div class="t" style="left:643px;top:404px;font-size:12px;color:#000;">L</div>
<div class="t" style="left:643px;top:429px;font-size:12px;color:#000;">ti</div>
<div class="t" style="left:643px;top:453px;font-size:12px;color:#000;">F</div>
<div class="t" style="left:673px;top:408px;width:43px;overflow:hidden;font-size:12px;color:#000;letter-spacing:-0.55px;text-align:right;padding-right:2px">100</div>
<div class="t" style="left:673px;top:433px;width:43px;overflow:hidden;font-size:12px;color:#000;letter-spacing:-0.55px;text-align:right;padding-right:2px">1.080</div>
<div class="t" style="left:673px;top:458px;width:43px;overflow:hidden;font-size:12px;color:#000;letter-spacing:-0.55px;text-align:right;padding-right:2px">2.340</div>
<div class="t" style="left:717px;top:408px;width:35px;overflow:hidden;font-size:12px;color:#000;letter-spacing:-0.55px;text-align:right;padding-right:2px">100</div>
<div class="t" style="left:717px;top:433px;width:35px;overflow:hidden;font-size:12px;color:#000;letter-spacing:-0.55px;text-align:right;padding-right:2px">1.080</div>
<div class="t" style="left:717px;top:458px;width:35px;overflow:hidden;font-size:12px;color:#000;letter-spacing:-0.55px;text-align:right;padding-right:2px">19.800</div>
<div class="t" style="left:753px;top:408px;width:40px;overflow:hidden;font-size:12px;color:#a0a0a0;letter-spacing:-0.55px;text-align:right;padding-right:2px">100</div>
<div class="t" style="left:753px;top:433px;width:40px;overflow:hidden;font-size:12px;color:#000;letter-spacing:-0.55px;text-align:right;padding-right:2px">0.000</div>
<div class="t" style="left:753px;top:458px;width:40px;overflow:hidden;font-size:12px;color:#000;letter-spacing:-0.55px;text-align:right;padding-right:2px">34.920</div>
<div class="t" style="left:794px;top:408px;width:36px;overflow:hidden;font-size:12px;color:#a0a0a0;letter-spacing:-0.55px;text-align:right;padding-right:2px">100</div>
<div class="t" style="left:794px;top:433px;width:36px;overflow:hidden;font-size:12px;color:#000;letter-spacing:-0.55px;text-align:right;padding-right:2px">0.000</div>
<div class="t" style="left:794px;top:458px;width:36px;overflow:hidden;font-size:12px;color:#000;letter-spacing:-0.55px;text-align:right;padding-right:2px">34.920</div>
<div class="t" style="left:831px;top:408px;width:34px;overflow:hidden;font-size:12px;color:#a0a0a0;letter-spacing:-0.55px;text-align:right;padding-right:2px">100</div>
<div class="t" style="left:831px;top:433px;width:34px;overflow:hidden;font-size:12px;color:#000;letter-spacing:-0.55px;text-align:right;padding-right:2px">0.000</div>
<div class="t" style="left:831px;top:458px;width:32px;overflow:hidden;font-size:12px;color:#000;letter-spacing:-0.55px;padding-left:1px">34.920</div>
<div class="t" style="left:866px;top:408px;width:30px;overflow:hidden;font-size:12px;color:#a0a0a0;letter-spacing:-0.55px;text-align:right;padding-right:2px">100</div>
<div class="t" style="left:866px;top:433px;width:30px;overflow:hidden;font-size:12px;color:#000;letter-spacing:-0.55px;text-align:right;padding-right:2px">0.000</div>
<div class="t" style="left:866px;top:458px;width:28px;overflow:hidden;font-size:12px;color:#000;letter-spacing:-0.55px;padding-left:1px">34.920</div>
<div class="t" style="left:897px;top:408px;width:38px;overflow:hidden;font-size:12px;color:#a0a0a0;letter-spacing:-0.55px;text-align:right;padding-right:2px">100</div>
<div class="t" style="left:897px;top:433px;width:38px;overflow:hidden;font-size:12px;color:#000;letter-spacing:-0.55px;text-align:right;padding-right:2px">0.000</div>
<div class="t" style="left:897px;top:458px;width:38px;overflow:hidden;font-size:12px;color:#000;letter-spacing:-0.55px;text-align:right;padding-right:2px">34.920</div>
<div class="t" style="left:936px;top:408px;width:39px;overflow:hidden;font-size:12px;color:#a0a0a0;letter-spacing:-0.55px;text-align:right;padding-right:2px">100</div>
<div class="t" style="left:936px;top:433px;width:39px;overflow:hidden;font-size:12px;color:#000;letter-spacing:-0.55px;text-align:right;padding-right:2px">0.000</div>
<div class="t" style="left:936px;top:458px;width:39px;overflow:hidden;font-size:12px;color:#000;letter-spacing:-0.55px;text-align:right;padding-right:2px">34.920</div>
<div class="t" style="left:976px;top:408px;width:41px;overflow:hidden;font-size:12px;color:#a0a0a0;letter-spacing:-0.55px;text-align:right;padding-right:2px">100</div>
<div class="t" style="left:976px;top:433px;width:41px;overflow:hidden;font-size:12px;color:#000;letter-spacing:-0.55px;text-align:right;padding-right:2px">0.000</div>
<div class="t" style="left:976px;top:458px;width:41px;overflow:hidden;font-size:12px;color:#000;letter-spacing:-0.55px;text-align:right;padding-right:2px">34.920</div>
<div class="t" style="left:1018px;top:408px;width:40px;overflow:hidden;font-size:12px;color:#a0a0a0;letter-spacing:-0.55px;text-align:right;padding-right:2px">100</div>
<div class="t" style="left:1018px;top:433px;width:40px;overflow:hidden;font-size:12px;color:#000;letter-spacing:-0.55px;text-align:right;padding-right:2px">0.000</div>
<div class="t" style="left:1018px;top:458px;width:40px;overflow:hidden;font-size:12px;color:#000;letter-spacing:-0.55px;text-align:right;padding-right:2px">34.920</div>
<div class="t" style="left:1059px;top:408px;width:43px;overflow:hidden;font-size:12px;color:#a0a0a0;letter-spacing:-0.55px;text-align:right;padding-right:2px">100</div>
<div class="t" style="left:1059px;top:433px;width:43px;overflow:hidden;font-size:12px;color:#000;letter-spacing:-0.55px;text-align:right;padding-right:2px">0.000</div>
<div class="t" style="left:1059px;top:458px;width:43px;overflow:hidden;font-size:12px;color:#000;letter-spacing:-0.55px;text-align:right;padding-right:2px">34.920</div>
<div class="t" style="left:1103px;top:408px;width:42px;overflow:hidden;font-size:12px;color:#a0a0a0;letter-spacing:-0.55px;text-align:right;padding-right:2px">100</div>
<div class="t" style="left:1103px;top:433px;width:42px;overflow:hidden;font-size:12px;color:#000;letter-spacing:-0.55px;text-align:right;padding-right:2px">0.000</div>
<div class="t" style="left:1103px;top:458px;width:42px;overflow:hidden;font-size:12px;color:#000;letter-spacing:-0.55px;text-align:right;padding-right:2px">34.920</div>
<div class="t" style="left:1146px;top:408px;width:37px;overflow:hidden;font-size:12px;color:#a0a0a0;letter-spacing:-0.55px;text-align:right;padding-right:2px">100</div>
<div class="t" style="left:1146px;top:433px;width:37px;overflow:hidden;font-size:12px;color:#000;letter-spacing:-0.55px;text-align:right;padding-right:2px">0.000</div>
<div class="t" style="left:1146px;top:458px;width:37px;overflow:hidden;font-size:12px;color:#000;letter-spacing:-0.55px;text-align:right;padding-right:2px">34.920</div>
<div class="t" style="left:1184px;top:408px;width:40px;overflow:hidden;font-size:12px;color:#a0a0a0;letter-spacing:-0.55px;text-align:right;padding-right:2px">100</div>
<div class="t" style="left:1184px;top:433px;width:40px;overflow:hidden;font-size:12px;color:#000;letter-spacing:-0.55px;text-align:right;padding-right:2px">0.000</div>
<div class="t" style="left:1184px;top:458px;width:40px;overflow:hidden;font-size:12px;color:#000;letter-spacing:-0.55px;text-align:right;padding-right:2px">34.920</div>
<div class="t" style="left:1225px;top:408px;width:43px;overflow:hidden;font-size:12px;color:#a0a0a0;letter-spacing:-0.55px;text-align:right;padding-right:2px">100</div>
<div class="t" style="left:1225px;top:433px;width:43px;overflow:hidden;font-size:12px;color:#000;letter-spacing:-0.55px;text-align:right;padding-right:2px">0.000</div>
<div class="t" style="left:1225px;top:458px;width:43px;overflow:hidden;font-size:12px;color:#000;letter-spacing:-0.55px;text-align:right;padding-right:2px">34.920</div>
<div class="t" style="left:1269px;top:408px;width:41px;overflow:hidden;font-size:12px;color:#a0a0a0;letter-spacing:-0.55px;text-align:right;padding-right:2px">100</div>
<div class="t" style="left:1269px;top:433px;width:41px;overflow:hidden;font-size:12px;color:#000;letter-spacing:-0.55px;text-align:right;padding-right:2px">0.000</div>
<div class="t" style="left:1269px;top:458px;width:41px;overflow:hidden;font-size:12px;color:#000;letter-spacing:-0.55px;text-align:right;padding-right:2px">34.920</div>
<div class="t" style="left:1311px;top:408px;width:37px;overflow:hidden;font-size:12px;color:#a0a0a0;letter-spacing:-0.55px;text-align:right;padding-right:2px">100</div>
<div class="t" style="left:1311px;top:433px;width:37px;overflow:hidden;font-size:12px;color:#000;letter-spacing:-0.55px;text-align:right;padding-right:2px">0.000</div>
<div class="t" style="left:1311px;top:458px;width:37px;overflow:hidden;font-size:12px;color:#000;letter-spacing:-0.55px;text-align:right;padding-right:2px">34.920</div>
<div class="t" style="left:1349px;top:408px;width:42px;overflow:hidden;font-size:12px;color:#a0a0a0;letter-spacing:-0.55px;text-align:right;padding-right:2px">100</div>
<div class="t" style="left:1349px;top:433px;width:42px;overflow:hidden;font-size:12px;color:#000;letter-spacing:-0.55px;text-align:right;padding-right:2px">0.000</div>
<div class="t" style="left:1349px;top:458px;width:42px;overflow:hidden;font-size:12px;color:#000;letter-spacing:-0.55px;text-align:right;padding-right:2px">34.920</div>
<div class="t" style="left:1392px;top:408px;width:38px;overflow:hidden;font-size:12px;color:#a0a0a0;letter-spacing:-0.55px;text-align:right;padding-right:2px">100</div>
<div class="t" style="left:1392px;top:433px;width:38px;overflow:hidden;font-size:12px;color:#000;letter-spacing:-0.55px;text-align:right;padding-right:2px">0.000</div>
<div class="t" style="left:1392px;top:458px;width:38px;overflow:hidden;font-size:12px;color:#000;letter-spacing:-0.55px;text-align:right;padding-right:2px">34.920</div>
<div class="ab" style="left:7px;top:477px;width:49px;height:99px;background:#ffffff"></div>
<div class="ab" style="left:56px;top:477px;width:585px;height:99px;background:#ffffff"></div>
<div class="ab" style="left:641px;top:477px;width:31px;height:99px;background:#ececec"></div>
<div class="ab" style="left:672px;top:477px;width:731px;height:24px;background:#efefef"></div>
<div class="ab" style="left:672px;top:502px;width:731px;height:48px;background:#ffffff"></div>
<div class="ab" style="left:672px;top:551px;width:731px;height:25px;background:#efefef"></div>
<div class="ab" style="left:7px;top:576px;width:1396px;height:1px;background:#b4b4b4"></div>
<div class="ab" style="left:56px;top:550px;width:253px;height:1px;background:#b4b4b4"></div>
<div class="ab" style="left:355px;top:501px;width:137px;height:1px;background:#b4b4b4"></div>
<div class="ab" style="left:641px;top:501px;width:762px;height:1px;background:#b4b4b4"></div>
<div class="ab" style="left:355px;top:526px;width:137px;height:1px;background:#b4b4b4"></div>
<div class="ab" style="left:641px;top:526px;width:762px;height:1px;background:#b4b4b4"></div>
<div class="ab" style="left:355px;top:550px;width:137px;height:1px;background:#b4b4b4"></div>
<div class="ab" style="left:641px;top:550px;width:762px;height:1px;background:#b4b4b4"></div>
<div class="ab" style="left:56px;top:477px;width:1px;height:99px;background:#b4b4b4"></div>
<div class="ab" style="left:309px;top:477px;width:1px;height:99px;background:#b4b4b4"></div>
<div class="ab" style="left:355px;top:477px;width:1px;height:99px;background:#b4b4b4"></div>
<div class="ab" style="left:423px;top:477px;width:1px;height:99px;background:#b4b4b4"></div>
<div class="ab" style="left:492px;top:477px;width:1px;height:99px;background:#b4b4b4"></div>
<div class="ab" style="left:641px;top:477px;width:1px;height:99px;background:#b4b4b4"></div>
<div class="ab" style="left:672px;top:477px;width:1px;height:99px;background:#b4b4b4"></div>
<div class="ab" style="left:716px;top:477px;width:1px;height:99px;background:#b4b4b4"></div>
<div class="ab" style="left:752px;top:477px;width:1px;height:99px;background:#b4b4b4"></div>
<div class="ab" style="left:793px;top:477px;width:1px;height:99px;background:#b4b4b4"></div>
<div class="ab" style="left:830px;top:477px;width:1px;height:99px;background:#b4b4b4"></div>
<div class="ab" style="left:865px;top:477px;width:1px;height:99px;background:#b4b4b4"></div>
<div class="ab" style="left:896px;top:477px;width:1px;height:99px;background:#b4b4b4"></div>
<div class="ab" style="left:935px;top:477px;width:1px;height:99px;background:#b4b4b4"></div>
<div class="ab" style="left:975px;top:477px;width:1px;height:99px;background:#b4b4b4"></div>
<div class="ab" style="left:1017px;top:477px;width:1px;height:99px;background:#b4b4b4"></div>
<div class="ab" style="left:1058px;top:477px;width:1px;height:99px;background:#b4b4b4"></div>
<div class="ab" style="left:1102px;top:477px;width:1px;height:99px;background:#b4b4b4"></div>
<div class="ab" style="left:1145px;top:477px;width:1px;height:99px;background:#b4b4b4"></div>
<div class="ab" style="left:1183px;top:477px;width:1px;height:99px;background:#b4b4b4"></div>
<div class="ab" style="left:1224px;top:477px;width:1px;height:99px;background:#b4b4b4"></div>
<div class="ab" style="left:1268px;top:477px;width:1px;height:99px;background:#b4b4b4"></div>
<div class="ab" style="left:1310px;top:477px;width:1px;height:99px;background:#b4b4b4"></div>
<div class="ab" style="left:1348px;top:477px;width:1px;height:99px;background:#b4b4b4"></div>
<div class="ab" style="left:1391px;top:477px;width:1px;height:99px;background:#b4b4b4"></div>
<div class="ab" style="left:55px;top:477px;width:2px;height:99px;background:#b9b9b9"></div>
<div class="t" style="left:-119px;width:300px;text-align:center;top:521px;font-size:12px;color:#000;">3</div>
<div class="t" style="left:60px;top:508px;font-size:12px;color:#000;letter-spacing:-0.05px">Insert strain relief</div>
<div class="t" style="left:60px;top:558px;font-size:12px;color:#000;letter-spacing:-0.05px">Release strain relief</div>
<div class="t" style="left:183px;width:300px;text-align:center;top:521px;font-size:12px;color:#000;letter-spacing:-0.3px">1 * 1.0</div>
<div class="t" style="left:498px;top:484px;font-size:12px;color:#000;letter-spacing:-0.1px">Valid for all cycles</div>
<div class="t" style="left:643px;top:504px;font-size:12px;color:#000;">L</div>
<div class="t" style="left:643px;top:529px;font-size:12px;color:#000;">ti</div>
<div class="t" style="left:643px;top:553px;font-size:12px;color:#000;">F</div>
<div class="t" style="left:673px;top:508px;width:43px;overflow:hidden;font-size:12px;color:#000;letter-spacing:-0.55px;text-align:right;padding-right:2px">100</div>
<div class="t" style="left:673px;top:533px;width:43px;overflow:hidden;font-size:12px;color:#000;letter-spacing:-0.55px;text-align:right;padding-right:2px">1.620</div>
<div class="t" style="left:673px;top:558px;width:43px;overflow:hidden;font-size:12px;color:#000;letter-spacing:-0.55px;text-align:right;padding-right:2px">3.960</div>
<div class="t" style="left:717px;top:508px;width:35px;overflow:hidden;font-size:12px;color:#000;letter-spacing:-0.55px;text-align:right;padding-right:2px">100</div>
<div class="t" style="left:717px;top:533px;width:35px;overflow:hidden;font-size:12px;color:#000;letter-spacing:-0.55px;text-align:right;padding-right:2px">1.620</div>
<div class="t" style="left:717px;top:558px;width:35px;overflow:hidden;font-size:12px;color:#000;letter-spacing:-0.55px;text-align:right;padding-right:2px">21.420</div>
<div class="t" style="left:753px;top:508px;width:40px;overflow:hidden;font-size:12px;color:#a0a0a0;letter-spacing:-0.55px;text-align:right;padding-right:2px">100</div>
<div class="t" style="left:753px;top:533px;width:40px;overflow:hidden;font-size:12px;color:#000;letter-spacing:-0.55px;text-align:right;padding-right:2px">0.000</div>
<div class="t" style="left:753px;top:558px;width:40px;overflow:hidden;font-size:12px;color:#000;letter-spacing:-0.55px;text-align:right;padding-right:2px">34.920</div>
<div class="t" style="left:794px;top:508px;width:36px;overflow:hidden;font-size:12px;color:#a0a0a0;letter-spacing:-0.55px;text-align:right;padding-right:2px">100</div>
<div class="t" style="left:794px;top:533px;width:36px;overflow:hidden;font-size:12px;color:#000;letter-spacing:-0.55px;text-align:right;padding-right:2px">0.000</div>
<div class="t" style="left:794px;top:558px;width:36px;overflow:hidden;font-size:12px;color:#000;letter-spacing:-0.55px;text-align:right;padding-right:2px">34.920</div>
<div class="t" style="left:831px;top:508px;width:34px;overflow:hidden;font-size:12px;color:#a0a0a0;letter-spacing:-0.55px;text-align:right;padding-right:2px">100</div>
<div class="t" style="left:831px;top:533px;width:34px;overflow:hidden;font-size:12px;color:#000;letter-spacing:-0.55px;text-align:right;padding-right:2px">0.000</div>
<div class="t" style="left:831px;top:558px;width:32px;overflow:hidden;font-size:12px;color:#000;letter-spacing:-0.55px;padding-left:1px">34.920</div>
<div class="t" style="left:866px;top:508px;width:30px;overflow:hidden;font-size:12px;color:#a0a0a0;letter-spacing:-0.55px;text-align:right;padding-right:2px">100</div>
<div class="t" style="left:866px;top:533px;width:30px;overflow:hidden;font-size:12px;color:#000;letter-spacing:-0.55px;text-align:right;padding-right:2px">0.000</div>
<div class="t" style="left:866px;top:558px;width:28px;overflow:hidden;font-size:12px;color:#000;letter-spacing:-0.55px;padding-left:1px">34.920</div>
<div class="t" style="left:897px;top:508px;width:38px;overflow:hidden;font-size:12px;color:#a0a0a0;letter-spacing:-0.55px;text-align:right;padding-right:2px">100</div>
<div class="t" style="left:897px;top:533px;width:38px;overflow:hidden;font-size:12px;color:#000;letter-spacing:-0.55px;text-align:right;padding-right:2px">0.000</div>
<div class="t" style="left:897px;top:558px;width:38px;overflow:hidden;font-size:12px;color:#000;letter-spacing:-0.55px;text-align:right;padding-right:2px">34.920</div>
<div class="t" style="left:936px;top:508px;width:39px;overflow:hidden;font-size:12px;color:#a0a0a0;letter-spacing:-0.55px;text-align:right;padding-right:2px">100</div>
<div class="t" style="left:936px;top:533px;width:39px;overflow:hidden;font-size:12px;color:#000;letter-spacing:-0.55px;text-align:right;padding-right:2px">0.000</div>
<div class="t" style="left:936px;top:558px;width:39px;overflow:hidden;font-size:12px;color:#000;letter-spacing:-0.55px;text-align:right;padding-right:2px">34.920</div>
<div class="t" style="left:976px;top:508px;width:41px;overflow:hidden;font-size:12px;color:#a0a0a0;letter-spacing:-0.55px;text-align:right;padding-right:2px">100</div>
<div class="t" style="left:976px;top:533px;width:41px;overflow:hidden;font-size:12px;color:#000;letter-spacing:-0.55px;text-align:right;padding-right:2px">0.000</div>
<div class="t" style="left:976px;top:558px;width:41px;overflow:hidden;font-size:12px;color:#000;letter-spacing:-0.55px;text-align:right;padding-right:2px">34.920</div>
<div class="t" style="left:1018px;top:508px;width:40px;overflow:hidden;font-size:12px;color:#a0a0a0;letter-spacing:-0.55px;text-align:right;padding-right:2px">100</div>
<div class="t" style="left:1018px;top:533px;width:40px;overflow:hidden;font-size:12px;color:#000;letter-spacing:-0.55px;text-align:right;padding-right:2px">0.000</div>
<div class="t" style="left:1018px;top:558px;width:40px;overflow:hidden;font-size:12px;color:#000;letter-spacing:-0.55px;text-align:right;padding-right:2px">34.920</div>
<div class="t" style="left:1059px;top:508px;width:43px;overflow:hidden;font-size:12px;color:#a0a0a0;letter-spacing:-0.55px;text-align:right;padding-right:2px">100</div>
<div class="t" style="left:1059px;top:533px;width:43px;overflow:hidden;font-size:12px;color:#000;letter-spacing:-0.55px;text-align:right;padding-right:2px">0.000</div>
<div class="t" style="left:1059px;top:558px;width:43px;overflow:hidden;font-size:12px;color:#000;letter-spacing:-0.55px;text-align:right;padding-right:2px">34.920</div>
<div class="t" style="left:1103px;top:508px;width:42px;overflow:hidden;font-size:12px;color:#a0a0a0;letter-spacing:-0.55px;text-align:right;padding-right:2px">100</div>
<div class="t" style="left:1103px;top:533px;width:42px;overflow:hidden;font-size:12px;color:#000;letter-spacing:-0.55px;text-align:right;padding-right:2px">0.000</div>
<div class="t" style="left:1103px;top:558px;width:42px;overflow:hidden;font-size:12px;color:#000;letter-spacing:-0.55px;text-align:right;padding-right:2px">34.920</div>
<div class="t" style="left:1146px;top:508px;width:37px;overflow:hidden;font-size:12px;color:#a0a0a0;letter-spacing:-0.55px;text-align:right;padding-right:2px">100</div>
<div class="t" style="left:1146px;top:533px;width:37px;overflow:hidden;font-size:12px;color:#000;letter-spacing:-0.55px;text-align:right;padding-right:2px">0.000</div>
<div class="t" style="left:1146px;top:558px;width:37px;overflow:hidden;font-size:12px;color:#000;letter-spacing:-0.55px;text-align:right;padding-right:2px">34.920</div>
<div class="t" style="left:1184px;top:508px;width:40px;overflow:hidden;font-size:12px;color:#a0a0a0;letter-spacing:-0.55px;text-align:right;padding-right:2px">100</div>
<div class="t" style="left:1184px;top:533px;width:40px;overflow:hidden;font-size:12px;color:#000;letter-spacing:-0.55px;text-align:right;padding-right:2px">0.000</div>
<div class="t" style="left:1184px;top:558px;width:40px;overflow:hidden;font-size:12px;color:#000;letter-spacing:-0.55px;text-align:right;padding-right:2px">34.920</div>
<div class="t" style="left:1225px;top:508px;width:43px;overflow:hidden;font-size:12px;color:#a0a0a0;letter-spacing:-0.55px;text-align:right;padding-right:2px">100</div>
<div class="t" style="left:1225px;top:533px;width:43px;overflow:hidden;font-size:12px;color:#000;letter-spacing:-0.55px;text-align:right;padding-right:2px">0.000</div>
<div class="t" style="left:1225px;top:558px;width:43px;overflow:hidden;font-size:12px;color:#000;letter-spacing:-0.55px;text-align:right;padding-right:2px">34.920</div>
<div class="t" style="left:1269px;top:508px;width:41px;overflow:hidden;font-size:12px;color:#a0a0a0;letter-spacing:-0.55px;text-align:right;padding-right:2px">100</div>
<div class="t" style="left:1269px;top:533px;width:41px;overflow:hidden;font-size:12px;color:#000;letter-spacing:-0.55px;text-align:right;padding-right:2px">0.000</div>
<div class="t" style="left:1269px;top:558px;width:41px;overflow:hidden;font-size:12px;color:#000;letter-spacing:-0.55px;text-align:right;padding-right:2px">34.920</div>
<div class="t" style="left:1311px;top:508px;width:37px;overflow:hidden;font-size:12px;color:#a0a0a0;letter-spacing:-0.55px;text-align:right;padding-right:2px">100</div>
<div class="t" style="left:1311px;top:533px;width:37px;overflow:hidden;font-size:12px;color:#000;letter-spacing:-0.55px;text-align:right;padding-right:2px">0.000</div>
<div class="t" style="left:1311px;top:558px;width:37px;overflow:hidden;font-size:12px;color:#000;letter-spacing:-0.55px;text-align:right;padding-right:2px">34.920</div>
<div class="t" style="left:1349px;top:508px;width:42px;overflow:hidden;font-size:12px;color:#a0a0a0;letter-spacing:-0.55px;text-align:right;padding-right:2px">100</div>
<div class="t" style="left:1349px;top:533px;width:42px;overflow:hidden;font-size:12px;color:#000;letter-spacing:-0.55px;text-align:right;padding-right:2px">0.000</div>
<div class="t" style="left:1349px;top:558px;width:42px;overflow:hidden;font-size:12px;color:#000;letter-spacing:-0.55px;text-align:right;padding-right:2px">34.920</div>
<div class="t" style="left:1392px;top:508px;width:38px;overflow:hidden;font-size:12px;color:#a0a0a0;letter-spacing:-0.55px;text-align:right;padding-right:2px">100</div>
<div class="t" style="left:1392px;top:533px;width:38px;overflow:hidden;font-size:12px;color:#000;letter-spacing:-0.55px;text-align:right;padding-right:2px">0.000</div>
<div class="t" style="left:1392px;top:558px;width:38px;overflow:hidden;font-size:12px;color:#000;letter-spacing:-0.55px;text-align:right;padding-right:2px">34.920</div>
<div class="ab" style="left:7px;top:577px;width:49px;height:99px;background:#ffffff"></div>
<div class="ab" style="left:56px;top:577px;width:585px;height:99px;background:#f5f5f5"></div>
<div class="ab" style="left:641px;top:577px;width:31px;height:99px;background:#ececec"></div>
<div class="ab" style="left:672px;top:577px;width:731px;height:24px;background:#eeeeee"></div>
<div class="ab" style="left:672px;top:602px;width:731px;height:48px;background:#f7f7f7"></div>
<div class="ab" style="left:672px;top:651px;width:731px;height:25px;background:#eeeeee"></div>
<div class="ab" style="left:7px;top:676px;width:1396px;height:1px;background:#b4b4b4"></div>
<div class="ab" style="left:56px;top:650px;width:253px;height:1px;background:#b4b4b4"></div>
<div class="ab" style="left:355px;top:601px;width:137px;height:1px;background:#b4b4b4"></div>
<div class="ab" style="left:641px;top:601px;width:762px;height:1px;background:#b4b4b4"></div>
<div class="ab" style="left:355px;top:626px;width:137px;height:1px;background:#b4b4b4"></div>
<div class="ab" style="left:641px;top:626px;width:762px;height:1px;background:#b4b4b4"></div>
<div class="ab" style="left:355px;top:650px;width:137px;height:1px;background:#b4b4b4"></div>
<div class="ab" style="left:641px;top:650px;width:762px;height:1px;background:#b4b4b4"></div>
<div class="ab" style="left:56px;top:577px;width:1px;height:99px;background:#b4b4b4"></div>
<div class="ab" style="left:309px;top:577px;width:1px;height:99px;background:#b4b4b4"></div>
<div class="ab" style="left:355px;top:577px;width:1px;height:99px;background:#b4b4b4"></div>
<div class="ab" style="left:423px;top:577px;width:1px;height:99px;background:#b4b4b4"></div>
<div class="ab" style="left:492px;top:577px;width:1px;height:99px;background:#b4b4b4"></div>
<div class="ab" style="left:641px;top:577px;width:1px;height:99px;background:#b4b4b4"></div>
<div class="ab" style="left:672px;top:577px;width:1px;height:99px;background:#b4b4b4"></div>
<div class="ab" style="left:716px;top:577px;width:1px;height:99px;background:#b4b4b4"></div>
<div class="ab" style="left:752px;top:577px;width:1px;height:99px;background:#b4b4b4"></div>
<div class="ab" style="left:793px;top:577px;width:1px;height:99px;background:#b4b4b4"></div>
<div class="ab" style="left:830px;top:577px;width:1px;height:99px;background:#b4b4b4"></div>
<div class="ab" style="left:865px;top:577px;width:1px;height:99px;background:#b4b4b4"></div>
<div class="ab" style="left:896px;top:577px;width:1px;height:99px;background:#b4b4b4"></div>
<div class="ab" style="left:935px;top:577px;width:1px;height:99px;background:#b4b4b4"></div>
<div class="ab" style="left:975px;top:577px;width:1px;height:99px;background:#b4b4b4"></div>
<div class="ab" style="left:1017px;top:577px;width:1px;height:99px;background:#b4b4b4"></div>
<div class="ab" style="left:1058px;top:577px;width:1px;height:99px;background:#b4b4b4"></div>
<div class="ab" style="left:1102px;top:577px;width:1px;height:99px;background:#b4b4b4"></div>
<div class="ab" style="left:1145px;top:577px;width:1px;height:99px;background:#b4b4b4"></div>
<div class="ab" style="left:1183px;top:577px;width:1px;height:99px;background:#b4b4b4"></div>
<div class="ab" style="left:1224px;top:577px;width:1px;height:99px;background:#b4b4b4"></div>
<div class="ab" style="left:1268px;top:577px;width:1px;height:99px;background:#b4b4b4"></div>
<div class="ab" style="left:1310px;top:577px;width:1px;height:99px;background:#b4b4b4"></div>
<div class="ab" style="left:1348px;top:577px;width:1px;height:99px;background:#b4b4b4"></div>
<div class="ab" style="left:1391px;top:577px;width:1px;height:99px;background:#b4b4b4"></div>
<div class="ab" style="left:55px;top:577px;width:2px;height:99px;background:#b9b9b9"></div>
<div class="t" style="left:-119px;width:300px;text-align:center;top:621px;font-size:12px;color:#000;">4</div>
<div class="t" style="left:60px;top:608px;font-size:12px;color:#000;letter-spacing:-0.05px">2 Fasten with a power screwdriver</div>
<div class="t" style="left:183px;width:300px;text-align:center;top:621px;font-size:12px;color:#000;letter-spacing:-0.3px">1 * 1.0</div>
<div class="t" style="left:498px;top:584px;font-size:12px;color:#000;letter-spacing:-0.1px">Valid for all cycles</div>
<div class="t" style="left:643px;top:604px;font-size:12px;color:#000;">L</div>
<div class="t" style="left:643px;top:629px;font-size:12px;color:#000;">ti</div>
<div class="t" style="left:643px;top:653px;font-size:12px;color:#000;">F</div>
<div class="t" style="left:673px;top:608px;width:43px;overflow:hidden;font-size:12px;color:#000;letter-spacing:-0.55px;text-align:right;padding-right:2px">100</div>
<div class="t" style="left:673px;top:633px;width:43px;overflow:hidden;font-size:12px;color:#000;letter-spacing:-0.55px;text-align:right;padding-right:2px">11.880</div>
<div class="t" style="left:717px;top:608px;width:35px;overflow:hidden;font-size:12px;color:#000;letter-spacing:-0.55px;text-align:right;padding-right:2px">100</div>
<div class="t" style="left:717px;top:633px;width:35px;overflow:hidden;font-size:12px;color:#000;letter-spacing:-0.55px;text-align:right;padding-right:2px">11.880</div>
<div class="t" style="left:753px;top:608px;width:40px;overflow:hidden;font-size:12px;color:#a0a0a0;letter-spacing:-0.55px;text-align:right;padding-right:2px">100</div>
<div class="t" style="left:753px;top:633px;width:40px;overflow:hidden;font-size:12px;color:#000;letter-spacing:-0.55px;text-align:right;padding-right:2px">0.000</div>
<div class="t" style="left:753px;top:658px;width:40px;overflow:hidden;font-size:12px;color:#000;letter-spacing:-0.55px;text-align:right;padding-right:2px">34.920</div>
<div class="t" style="left:794px;top:608px;width:36px;overflow:hidden;font-size:12px;color:#a0a0a0;letter-spacing:-0.55px;text-align:right;padding-right:2px">100</div>
<div class="t" style="left:794px;top:633px;width:36px;overflow:hidden;font-size:12px;color:#000;letter-spacing:-0.55px;text-align:right;padding-right:2px">0.000</div>
<div class="t" style="left:794px;top:658px;width:36px;overflow:hidden;font-size:12px;color:#000;letter-spacing:-0.55px;text-align:right;padding-right:2px">34.920</div>
<div class="t" style="left:831px;top:608px;width:34px;overflow:hidden;font-size:12px;color:#a0a0a0;letter-spacing:-0.55px;text-align:right;padding-right:2px">100</div>
<div class="t" style="left:831px;top:633px;width:34px;overflow:hidden;font-size:12px;color:#000;letter-spacing:-0.55px;text-align:right;padding-right:2px">0.000</div>
<div class="t" style="left:831px;top:658px;width:32px;overflow:hidden;font-size:12px;color:#000;letter-spacing:-0.55px;padding-left:1px">34.920</div>
<div class="t" style="left:866px;top:608px;width:30px;overflow:hidden;font-size:12px;color:#a0a0a0;letter-spacing:-0.55px;text-align:right;padding-right:2px">100</div>
<div class="t" style="left:866px;top:633px;width:30px;overflow:hidden;font-size:12px;color:#000;letter-spacing:-0.55px;text-align:right;padding-right:2px">0.000</div>
<div class="t" style="left:866px;top:658px;width:28px;overflow:hidden;font-size:12px;color:#000;letter-spacing:-0.55px;padding-left:1px">34.920</div>
<div class="t" style="left:897px;top:608px;width:38px;overflow:hidden;font-size:12px;color:#a0a0a0;letter-spacing:-0.55px;text-align:right;padding-right:2px">100</div>
<div class="t" style="left:897px;top:633px;width:38px;overflow:hidden;font-size:12px;color:#000;letter-spacing:-0.55px;text-align:right;padding-right:2px">0.000</div>
<div class="t" style="left:897px;top:658px;width:38px;overflow:hidden;font-size:12px;color:#000;letter-spacing:-0.55px;text-align:right;padding-right:2px">34.920</div>
<div class="t" style="left:936px;top:608px;width:39px;overflow:hidden;font-size:12px;color:#a0a0a0;letter-spacing:-0.55px;text-align:right;padding-right:2px">100</div>
<div class="t" style="left:936px;top:633px;width:39px;overflow:hidden;font-size:12px;color:#000;letter-spacing:-0.55px;text-align:right;padding-right:2px">0.000</div>
<div class="t" style="left:936px;top:658px;width:39px;overflow:hidden;font-size:12px;color:#000;letter-spacing:-0.55px;text-align:right;padding-right:2px">34.920</div>
<div class="t" style="left:976px;top:608px;width:41px;overflow:hidden;font-size:12px;color:#a0a0a0;letter-spacing:-0.55px;text-align:right;padding-right:2px">100</div>
<div class="t" style="left:976px;top:633px;width:41px;overflow:hidden;font-size:12px;color:#000;letter-spacing:-0.55px;text-align:right;padding-right:2px">0.000</div>
<div class="t" style="left:976px;top:658px;width:41px;overflow:hidden;font-size:12px;color:#000;letter-spacing:-0.55px;text-align:right;padding-right:2px">34.920</div>
<div class="t" style="left:1018px;top:608px;width:40px;overflow:hidden;font-size:12px;color:#a0a0a0;letter-spacing:-0.55px;text-align:right;padding-right:2px">100</div>
<div class="t" style="left:1018px;top:633px;width:40px;overflow:hidden;font-size:12px;color:#000;letter-spacing:-0.55px;text-align:right;padding-right:2px">0.000</div>
<div class="t" style="left:1018px;top:658px;width:40px;overflow:hidden;font-size:12px;color:#000;letter-spacing:-0.55px;text-align:right;padding-right:2px">34.920</div>
<div class="t" style="left:1059px;top:608px;width:43px;overflow:hidden;font-size:12px;color:#a0a0a0;letter-spacing:-0.55px;text-align:right;padding-right:2px">100</div>
<div class="t" style="left:1059px;top:633px;width:43px;overflow:hidden;font-size:12px;color:#000;letter-spacing:-0.55px;text-align:right;padding-right:2px">0.000</div>
<div class="t" style="left:1059px;top:658px;width:43px;overflow:hidden;font-size:12px;color:#000;letter-spacing:-0.55px;text-align:right;padding-right:2px">34.920</div>
<div class="t" style="left:1103px;top:608px;width:42px;overflow:hidden;font-size:12px;color:#a0a0a0;letter-spacing:-0.55px;text-align:right;padding-right:2px">100</div>
<div class="t" style="left:1103px;top:633px;width:42px;overflow:hidden;font-size:12px;color:#000;letter-spacing:-0.55px;text-align:right;padding-right:2px">0.000</div>
<div class="t" style="left:1103px;top:658px;width:42px;overflow:hidden;font-size:12px;color:#000;letter-spacing:-0.55px;text-align:right;padding-right:2px">34.920</div>
<div class="t" style="left:1146px;top:608px;width:37px;overflow:hidden;font-size:12px;color:#a0a0a0;letter-spacing:-0.55px;text-align:right;padding-right:2px">100</div>
<div class="t" style="left:1146px;top:633px;width:37px;overflow:hidden;font-size:12px;color:#000;letter-spacing:-0.55px;text-align:right;padding-right:2px">0.000</div>
<div class="t" style="left:1146px;top:658px;width:37px;overflow:hidden;font-size:12px;color:#000;letter-spacing:-0.55px;text-align:right;padding-right:2px">34.920</div>
<div class="t" style="left:1184px;top:608px;width:40px;overflow:hidden;font-size:12px;color:#a0a0a0;letter-spacing:-0.55px;text-align:right;padding-right:2px">100</div>
<div class="t" style="left:1184px;top:633px;width:40px;overflow:hidden;font-size:12px;color:#000;letter-spacing:-0.55px;text-align:right;padding-right:2px">0.000</div>
<div class="t" style="left:1184px;top:658px;width:40px;overflow:hidden;font-size:12px;color:#000;letter-spacing:-0.55px;text-align:right;padding-right:2px">34.920</div>
<div class="t" style="left:1225px;top:608px;width:43px;overflow:hidden;font-size:12px;color:#a0a0a0;letter-spacing:-0.55px;text-align:right;padding-right:2px">100</div>
<div class="t" style="left:1225px;top:633px;width:43px;overflow:hidden;font-size:12px;color:#000;letter-spacing:-0.55px;text-align:right;padding-right:2px">0.000</div>
<div class="t" style="left:1225px;top:658px;width:43px;overflow:hidden;font-size:12px;color:#000;letter-spacing:-0.55px;text-align:right;padding-right:2px">34.920</div>
<div class="t" style="left:1269px;top:608px;width:41px;overflow:hidden;font-size:12px;color:#a0a0a0;letter-spacing:-0.55px;text-align:right;padding-right:2px">100</div>
<div class="t" style="left:1269px;top:633px;width:41px;overflow:hidden;font-size:12px;color:#000;letter-spacing:-0.55px;text-align:right;padding-right:2px">0.000</div>
<div class="t" style="left:1269px;top:658px;width:41px;overflow:hidden;font-size:12px;color:#000;letter-spacing:-0.55px;text-align:right;padding-right:2px">34.920</div>
<div class="t" style="left:1311px;top:608px;width:37px;overflow:hidden;font-size:12px;color:#a0a0a0;letter-spacing:-0.55px;text-align:right;padding-right:2px">100</div>
<div class="t" style="left:1311px;top:633px;width:37px;overflow:hidden;font-size:12px;color:#000;letter-spacing:-0.55px;text-align:right;padding-right:2px">0.000</div>
<div class="t" style="left:1311px;top:658px;width:37px;overflow:hidden;font-size:12px;color:#000;letter-spacing:-0.55px;text-align:right;padding-right:2px">34.920</div>
<div class="t" style="left:1349px;top:608px;width:42px;overflow:hidden;font-size:12px;color:#a0a0a0;letter-spacing:-0.55px;text-align:right;padding-right:2px">100</div>
<div class="t" style="left:1349px;top:633px;width:42px;overflow:hidden;font-size:12px;color:#000;letter-spacing:-0.55px;text-align:right;padding-right:2px">0.000</div>
<div class="t" style="left:1349px;top:658px;width:42px;overflow:hidden;font-size:12px;color:#000;letter-spacing:-0.55px;text-align:right;padding-right:2px">34.920</div>
<div class="t" style="left:1392px;top:608px;width:38px;overflow:hidden;font-size:12px;color:#a0a0a0;letter-spacing:-0.55px;text-align:right;padding-right:2px">100</div>
<div class="t" style="left:1392px;top:633px;width:38px;overflow:hidden;font-size:12px;color:#000;letter-spacing:-0.55px;text-align:right;padding-right:2px">0.000</div>
<div class="t" style="left:1392px;top:658px;width:38px;overflow:hidden;font-size:12px;color:#000;letter-spacing:-0.55px;text-align:right;padding-right:2px">34.920</div>
</body></html>
